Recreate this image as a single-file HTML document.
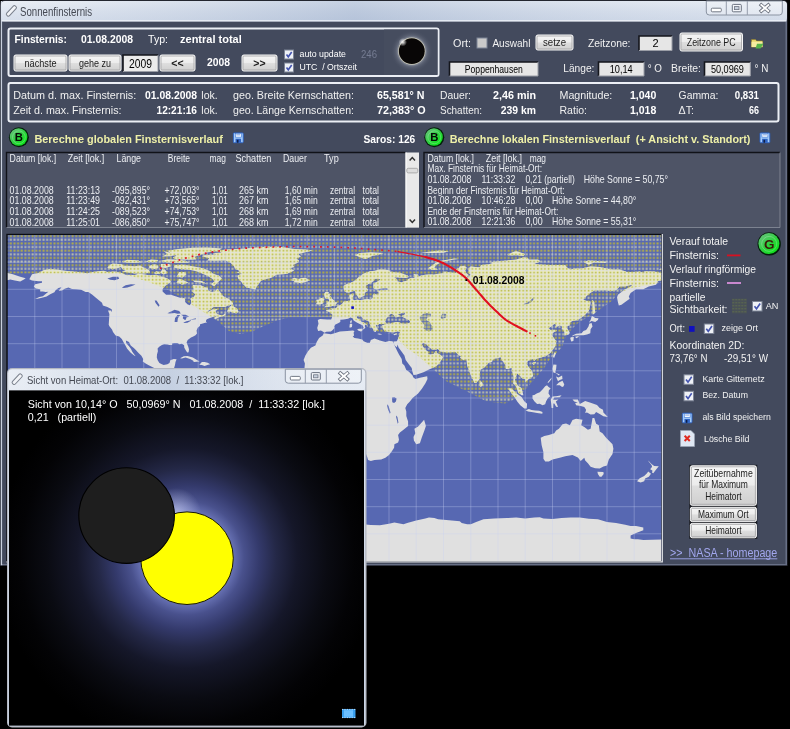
<!DOCTYPE html>
<html lang="de"><head><meta charset="utf-8"><title>Sonnenfinsternis</title>
<style>
html,body{margin:0;padding:0;background:#000;overflow:hidden}
body{width:790px;height:729px;font-family:"Liberation Sans",sans-serif}
svg{display:block;position:absolute;left:0;top:0;will-change:transform}
svg text{font-family:"Liberation Sans",sans-serif;white-space:pre}
</style></head><body>
<svg width="790" height="729" viewBox="0 0 790 729">
<defs>
<linearGradient id="btn" x1="0" y1="0" x2="0" y2="1"><stop offset="0" stop-color="#f6f6f6"/><stop offset="0.48" stop-color="#ececec"/><stop offset="0.52" stop-color="#dedede"/><stop offset="1" stop-color="#cfcfcf"/></linearGradient>
<linearGradient id="ttl" x1="0" y1="0" x2="0" y2="1"><stop offset="0" stop-color="#e3e9f2"/><stop offset="0.5" stop-color="#d3dcea"/><stop offset="1" stop-color="#c9d4e5"/></linearGradient>
<linearGradient id="ttlh" x1="0" y1="0" x2="1" y2="0"><stop offset="0" stop-color="#ffffff" stop-opacity="0.25"/><stop offset="0.45" stop-color="#8fa3c4" stop-opacity="0.35"/><stop offset="1" stop-color="#ffffff" stop-opacity="0.15"/></linearGradient>
<linearGradient id="grn" x1="0.15" y1="0.1" x2="0.85" y2="0.9"><stop offset="0" stop-color="#62c477"/><stop offset="0.5" stop-color="#2fd040"/><stop offset="1" stop-color="#0ce41a"/></linearGradient>
<radialGradient id="glow" cx="187" cy="558" r="190" gradientUnits="userSpaceOnUse">
<stop offset="0" stop-color="#7a84c0"/><stop offset="0.245" stop-color="#6670b2"/><stop offset="0.30" stop-color="#49518d"/><stop offset="0.38" stop-color="#343a6c"/><stop offset="0.47" stop-color="#242847"/><stop offset="0.58" stop-color="#151729"/><stop offset="0.74" stop-color="#0a0b12"/><stop offset="0.88" stop-color="#030305"/><stop offset="1" stop-color="#000000"/></radialGradient>
<radialGradient id="glow2" cx="176" cy="513" r="25" gradientUnits="userSpaceOnUse"><stop offset="0" stop-color="#c8cef4" stop-opacity="0.7"/><stop offset="1" stop-color="#c8cef4" stop-opacity="0"/></radialGradient>
<radialGradient id="hl" cx="0.5" cy="0.5" r="0.5"><stop offset="0" stop-color="#fff" stop-opacity="0.95"/><stop offset="1" stop-color="#fff" stop-opacity="0"/></radialGradient>
<radialGradient id="corona" cx="0.5" cy="0.5" r="0.5"><stop offset="0.6" stop-color="#c8ccd2" stop-opacity="0.75"/><stop offset="0.75" stop-color="#8a90a0" stop-opacity="0.32"/><stop offset="1" stop-color="#4a5062" stop-opacity="0"/></radialGradient>
</defs>
<rect x="0" y="0" width="790" height="729" fill="#000"/>
<path d="M0 566 V5 Q0 0 5 0 H782.6 Q787.6 0 787.6 5 V566 Z" fill="#23262f"/>
<path d="M0.8 565.2 V5.5 Q0.8 1 5.3 1 H782.5 Q787 1 787 5.5 V565.2 Z" fill="#687086"/>
<rect x="0.8" y="1" width="1.4" height="564.2" fill="#c9d0de"/>
<rect x="1" y="1" width="786" height="21" rx="4" fill="url(#ttl)"/>
<rect x="1" y="1" width="786" height="21" rx="4" fill="url(#ttlh)"/>
<rect x="2.2" y="21.4" width="783.3" height="542.6" fill="#434a5d"/>
<rect x="1.5" y="20.3" width="785" height="1.1" fill="#f2f5fa"/>
<g transform="translate(11.4 10.9) rotate(-47)"><rect x="-6.3" y="-1.9" width="12.6" height="3.8" rx="1.5" fill="#f2f4f8" stroke="#7a808c" stroke-width="1"/></g>
<text x="20.0" y="15.9" font-size="12" fill="#444852" textLength="72.0" lengthAdjust="spacingAndGlyphs">Sonnenfinsternis</text>
<path d="M706.3 1 H782.3 V12.0 Q782.3 15.0 779.3 15.0 H709.3 Q706.3 15.0 706.3 12.0 Z" fill="#ffffff" fill-opacity="0.3" stroke="#8a93a2" stroke-width="1"/>
<path d="M726.3 1 V15.0 M747.3 1 V15.0" stroke="#949cab" stroke-width="1" fill="none"/>
<rect x="711.3" y="8.2" width="10.0" height="3.6" rx="1" fill="#fff" stroke="#747a86" stroke-width="1"/>
<rect x="732.3" y="4.4" width="9.0" height="7.4" rx="1" fill="#f4f6fa" stroke="#6b7280" stroke-width="1"/>
<rect x="734.6" y="6.6" width="4.4" height="3.0" fill="#c9d1de" stroke="#6b7280" stroke-width="0.8"/>
<path d="M761.3 5.0 L768.3 11.0 M768.3 5.0 L761.3 11.0" stroke="#6a707c" stroke-width="3.6" stroke-linecap="square" fill="none"/>
<path d="M761.3 5.0 L768.3 11.0 M768.3 5.0 L761.3 11.0" stroke="#ffffff" stroke-width="1.9" stroke-linecap="square" fill="none"/>
<rect x="8.5" y="28.5" width="430" height="47.5" rx="2" fill="none" stroke="#eceff5" stroke-width="2"/>
<rect x="8.5" y="83" width="770" height="38.5" rx="2" fill="none" stroke="#eceff5" stroke-width="2"/>
<text x="14.5" y="43.0" font-size="10.6" fill="#ffffff" font-weight="bold" textLength="52.5" lengthAdjust="spacingAndGlyphs">Finsternis:</text>
<text x="81.0" y="43.0" font-size="10.6" fill="#ffffff" font-weight="bold" textLength="52.0" lengthAdjust="spacingAndGlyphs">01.08.2008</text>
<text x="148.0" y="43.0" font-size="10.6" fill="#ffffff" textLength="20.0" lengthAdjust="spacingAndGlyphs">Typ:</text>
<text x="180.0" y="43.0" font-size="10.6" fill="#ffffff" font-weight="bold" textLength="61.8" lengthAdjust="spacingAndGlyphs">zentral total</text>
<rect x="14" y="55" width="53" height="16" rx="1.8" fill="url(#btn)" stroke="#f6f6f6" stroke-width="1"/>
<rect x="15" y="56" width="51" height="14" rx="1.2" fill="none" stroke="#a4a4a6" stroke-opacity="0.9" stroke-width="0.9"/>
<text x="40.5" y="66.7" font-size="10.2" fill="#1c1c1c" text-anchor="middle" textLength="32" lengthAdjust="spacingAndGlyphs">nächste</text>
<rect x="69" y="55" width="52" height="16" rx="1.8" fill="url(#btn)" stroke="#f6f6f6" stroke-width="1"/>
<rect x="70" y="56" width="50" height="14" rx="1.2" fill="none" stroke="#a4a4a6" stroke-opacity="0.9" stroke-width="0.9"/>
<text x="95.0" y="66.7" font-size="10.2" fill="#1c1c1c" text-anchor="middle" textLength="32" lengthAdjust="spacingAndGlyphs">gehe zu</text>
<rect x="123" y="55" width="35" height="16.5" fill="#ebebeb"/>
<path d="M123 71.5 V55 H158" fill="none" stroke="#14161c" stroke-width="1.6"/>
<path d="M123 71.5 H158 V55" fill="none" stroke="#9a9da6" stroke-width="1"/>
<text x="140.5" y="67.9" font-size="12.8" fill="#000" text-anchor="middle" textLength="23" lengthAdjust="spacingAndGlyphs">2009</text>
<rect x="160" y="55" width="35" height="16" rx="1.8" fill="url(#btn)" stroke="#f6f6f6" stroke-width="1"/>
<rect x="161" y="56" width="33" height="14" rx="1.2" fill="none" stroke="#a4a4a6" stroke-opacity="0.9" stroke-width="0.9"/>
<text x="177.5" y="66.8" font-size="10.5" fill="#1c1c1c" text-anchor="middle" font-weight="bold">&lt;&lt;</text>
<text x="207.0" y="66.3" font-size="10.6" fill="#ffffff" font-weight="bold" textLength="23.0" lengthAdjust="spacingAndGlyphs">2008</text>
<rect x="242" y="55" width="35" height="16" rx="1.8" fill="url(#btn)" stroke="#f6f6f6" stroke-width="1"/>
<rect x="243" y="56" width="33" height="14" rx="1.2" fill="none" stroke="#a4a4a6" stroke-opacity="0.9" stroke-width="0.9"/>
<text x="259.5" y="66.8" font-size="10.5" fill="#1c1c1c" text-anchor="middle" font-weight="bold">&gt;&gt;</text>
<rect x="284.5" y="50" width="9" height="9" fill="#eef1f6" stroke="#7d8496" stroke-width="1"/>
<path d="M286.5 54.5 L288.28 56.8 L291.7 52" fill="none" stroke="#4454b0" stroke-width="1.6"/>
<text x="299.5" y="57.0" font-size="9.4" fill="#ffffff" textLength="46.5" lengthAdjust="spacingAndGlyphs">auto update</text>
<text x="361.0" y="57.5" font-size="10.6" fill="#757c92" textLength="16.0" lengthAdjust="spacingAndGlyphs">246</text>
<rect x="284.5" y="63" width="9" height="9" fill="#eef1f6" stroke="#7d8496" stroke-width="1"/>
<path d="M286.5 67.5 L288.28 69.8 L291.7 65" fill="none" stroke="#4454b0" stroke-width="1.6"/>
<text x="299.5" y="70.0" font-size="9.4" fill="#ffffff" textLength="57.5" lengthAdjust="spacingAndGlyphs">UTC  / Ortszeit</text>
<rect x="384" y="29.5" width="53.5" height="45.5" fill="#464d5f"/>
<circle cx="411.8" cy="51.2" r="21" fill="url(#corona)"/>
<circle cx="411.8" cy="51.2" r="13.6" fill="#cfcdb8" fill-opacity="0.9"/>
<circle cx="411.8" cy="51.2" r="12.9" fill="#080606"/>
<circle cx="402.8" cy="42.2" r="4.2" fill="url(#hl)"/>
<text x="453.0" y="46.6" font-size="11.4" fill="#f2f2f2" textLength="18.0" lengthAdjust="spacingAndGlyphs">Ort:</text>
<rect x="477" y="38" width="10" height="10" fill="#c9c9c9" stroke="#7d8496" stroke-width="1"/>
<text x="492.4" y="46.6" font-size="11.4" fill="#f2f2f2" textLength="38.0" lengthAdjust="spacingAndGlyphs">Auswahl</text>
<rect x="536" y="35" width="37" height="15" rx="1.8" fill="url(#btn)" stroke="#f6f6f6" stroke-width="1"/>
<rect x="537" y="36" width="35" height="13" rx="1.2" fill="none" stroke="#a4a4a6" stroke-opacity="0.9" stroke-width="0.9"/>
<text x="554.5" y="46.3" font-size="10.6" fill="#1c1c1c" text-anchor="middle" textLength="23" lengthAdjust="spacingAndGlyphs">setze</text>
<text x="588.0" y="46.6" font-size="11.4" fill="#f2f2f2" textLength="42.5" lengthAdjust="spacingAndGlyphs">Zeitzone:</text>
<rect x="639" y="36" width="33" height="14.5" fill="#e6e6e6"/>
<path d="M639 50.5 V36 H672" fill="none" stroke="#14161c" stroke-width="1.6"/>
<path d="M639 50.5 H672 V36" fill="none" stroke="#9a9da6" stroke-width="1"/>
<text x="655.5" y="47.2" font-size="11" fill="#000" text-anchor="middle">2</text>
<rect x="680" y="33" width="62.5" height="18" rx="1.8" fill="url(#btn)" stroke="#f6f6f6" stroke-width="1"/>
<rect x="681" y="34" width="60.5" height="16" rx="1.2" fill="none" stroke="#a4a4a6" stroke-opacity="0.9" stroke-width="0.9"/>
<text x="711.2" y="45.8" font-size="10.6" fill="#1c1c1c" text-anchor="middle" textLength="49" lengthAdjust="spacingAndGlyphs">Zeitzone PC</text>
<g transform="translate(751.5 37.5)"><path d="M0 2 H4 L5.2 3.4 H11 V9.6 H0 Z" fill="#e9d66a" stroke="#8d7a2a" stroke-width="0.6"/><path d="M0 4.2 H11 V9.6 H0 Z" fill="#f6eda0"/><path d="M5.5 6.2 L12 6.2 L9 11 L4 11 Z" fill="#57b44a"/></g>
<rect x="449.5" y="62" width="88.5" height="14" fill="#e6e6e6"/>
<path d="M449.5 76 V62 H538" fill="none" stroke="#14161c" stroke-width="1.6"/>
<path d="M449.5 76 H538 V62" fill="none" stroke="#9a9da6" stroke-width="1"/>
<text x="493.8" y="72.7" font-size="10.2" fill="#000" text-anchor="middle" textLength="58" lengthAdjust="spacingAndGlyphs">Poppenhausen</text>
<text x="563.3" y="72.4" font-size="11.4" fill="#f2f2f2" textLength="31.1" lengthAdjust="spacingAndGlyphs">Länge:</text>
<rect x="598.5" y="62" width="45.5" height="14" fill="#e6e6e6"/>
<path d="M598.5 76 V62 H644" fill="none" stroke="#14161c" stroke-width="1.6"/>
<path d="M598.5 76 H644 V62" fill="none" stroke="#9a9da6" stroke-width="1"/>
<text x="621.2" y="72.7" font-size="10.2" fill="#000" text-anchor="middle" textLength="23" lengthAdjust="spacingAndGlyphs">10,14</text>
<text x="647.7" y="72.4" font-size="11.4" fill="#f2f2f2" textLength="14.3" lengthAdjust="spacingAndGlyphs">° O</text>
<text x="671.0" y="72.4" font-size="11.4" fill="#f2f2f2" textLength="30.0" lengthAdjust="spacingAndGlyphs">Breite:</text>
<rect x="704.5" y="62" width="45.799999999999955" height="14" fill="#e6e6e6"/>
<path d="M704.5 76 V62 H750.3" fill="none" stroke="#14161c" stroke-width="1.6"/>
<path d="M704.5 76 H750.3 V62" fill="none" stroke="#9a9da6" stroke-width="1"/>
<text x="727.4" y="72.7" font-size="10.2" fill="#000" text-anchor="middle" textLength="33" lengthAdjust="spacingAndGlyphs">50,0969</text>
<text x="754.6" y="72.4" font-size="11.4" fill="#f2f2f2" textLength="13.9" lengthAdjust="spacingAndGlyphs">° N</text>
<text x="13.2" y="98.5" font-size="11.2" fill="#f0f0f0" textLength="123.0" lengthAdjust="spacingAndGlyphs">Datum d. max. Finsternis:</text>
<text x="145.0" y="98.5" font-size="10.6" fill="#ffffff" font-weight="bold" textLength="52.0" lengthAdjust="spacingAndGlyphs">01.08.2008</text>
<text x="201.3" y="98.5" font-size="11.2" fill="#f0f0f0" textLength="16.4" lengthAdjust="spacingAndGlyphs">lok.</text>
<text x="233.0" y="98.5" font-size="11.2" fill="#f0f0f0" textLength="121.0" lengthAdjust="spacingAndGlyphs">geo. Breite Kernschatten:</text>
<text x="377.0" y="98.5" font-size="10.6" fill="#ffffff" font-weight="bold" textLength="47.5" lengthAdjust="spacingAndGlyphs">65,581° N</text>
<text x="440.0" y="98.5" font-size="11.2" fill="#f0f0f0" textLength="31.0" lengthAdjust="spacingAndGlyphs">Dauer:</text>
<text x="493.0" y="98.5" font-size="10.6" fill="#ffffff" font-weight="bold" textLength="43.0" lengthAdjust="spacingAndGlyphs">2,46 min</text>
<text x="559.5" y="98.5" font-size="11.2" fill="#f0f0f0" textLength="52.8" lengthAdjust="spacingAndGlyphs">Magnitude:</text>
<text x="630.0" y="98.5" font-size="10.6" fill="#ffffff" font-weight="bold" textLength="26.3" lengthAdjust="spacingAndGlyphs">1,040</text>
<text x="678.6" y="98.5" font-size="11.2" fill="#f0f0f0" textLength="39.8" lengthAdjust="spacingAndGlyphs">Gamma:</text>
<text x="734.8" y="98.5" font-size="10.6" fill="#ffffff" font-weight="bold" textLength="24.2" lengthAdjust="spacingAndGlyphs">0,831</text>
<text x="13.2" y="114.2" font-size="11.2" fill="#f0f0f0" textLength="108.3" lengthAdjust="spacingAndGlyphs">Zeit d. max. Finsternis:</text>
<text x="156.5" y="114.2" font-size="10.6" fill="#ffffff" font-weight="bold" textLength="40.5" lengthAdjust="spacingAndGlyphs">12:21:16</text>
<text x="201.3" y="114.2" font-size="11.2" fill="#f0f0f0" textLength="16.4" lengthAdjust="spacingAndGlyphs">lok.</text>
<text x="233.0" y="114.2" font-size="11.2" fill="#f0f0f0" textLength="121.0" lengthAdjust="spacingAndGlyphs">geo. Länge Kernschatten:</text>
<text x="377.0" y="114.2" font-size="10.6" fill="#ffffff" font-weight="bold" textLength="48.6" lengthAdjust="spacingAndGlyphs">72,383° O</text>
<text x="440.0" y="114.2" font-size="11.2" fill="#f0f0f0" textLength="42.0" lengthAdjust="spacingAndGlyphs">Schatten:</text>
<text x="500.8" y="114.2" font-size="10.6" fill="#ffffff" font-weight="bold" textLength="35.2" lengthAdjust="spacingAndGlyphs">239 km</text>
<text x="559.5" y="114.2" font-size="11.2" fill="#f0f0f0" textLength="27.5" lengthAdjust="spacingAndGlyphs">Ratio:</text>
<text x="630.0" y="114.2" font-size="10.6" fill="#ffffff" font-weight="bold" textLength="26.3" lengthAdjust="spacingAndGlyphs">1,018</text>
<text x="678.6" y="114.2" font-size="11.2" fill="#f0f0f0" textLength="15.4" lengthAdjust="spacingAndGlyphs">ΔT:</text>
<text x="749.0" y="114.2" font-size="10.6" fill="#ffffff" font-weight="bold" textLength="10.0" lengthAdjust="spacingAndGlyphs">66</text>
<circle cx="18.9" cy="137.3" r="10" fill="#04200a"/>
<circle cx="18.599999999999998" cy="137.0" r="8.8" fill="url(#grn)"/>
<circle cx="18.9" cy="137.3" r="6.4" fill="none" stroke="#ffffff" stroke-opacity="0.22" stroke-width="1"/>
<text x="18.9" y="141.4" font-size="11.3" font-weight="bold" fill="#050805" text-anchor="middle">B</text>
<text x="34.4" y="142.8" font-size="11.6" fill="#eef0a8" font-weight="bold" textLength="188.4" lengthAdjust="spacingAndGlyphs">Berechne globalen Finsternisverlauf</text>
<g transform="translate(233 132.5) scale(0.9636363636363636)"><rect x="0.4" y="0.4" width="10.2" height="10.2" rx="0.8" fill="#a4cdfb" stroke="#2a62c8" stroke-width="0.9"/><rect x="2.4" y="1" width="6.2" height="3.8" fill="#f4f9ff" stroke="#3a72d0" stroke-width="0.6"/><path d="M3.4 2.4 H7.6" stroke="#3a72d0" stroke-width="0.7"/><rect x="2.6" y="6.5" width="5.8" height="4.1" fill="#2f64c4"/><rect x="4" y="7.6" width="1.7" height="3" fill="#0e1f48"/></g>
<text x="363.5" y="143.0" font-size="11" fill="#ffffff" font-weight="bold" textLength="51.8" lengthAdjust="spacingAndGlyphs">Saros: 126</text>
<circle cx="434.3" cy="137.3" r="10" fill="#04200a"/>
<circle cx="434.0" cy="137.0" r="8.8" fill="url(#grn)"/>
<circle cx="434.3" cy="137.3" r="6.4" fill="none" stroke="#ffffff" stroke-opacity="0.22" stroke-width="1"/>
<text x="434.3" y="141.4" font-size="11.3" font-weight="bold" fill="#050805" text-anchor="middle">B</text>
<text x="449.7" y="142.8" font-size="11.6" fill="#eef0a8" font-weight="bold" textLength="300.8" lengthAdjust="spacingAndGlyphs">Berechne lokalen Finsternisverlauf  (+ Ansicht v. Standort)</text>
<g transform="translate(759.6 132.5) scale(0.9636363636363636)"><rect x="0.4" y="0.4" width="10.2" height="10.2" rx="0.8" fill="#a4cdfb" stroke="#2a62c8" stroke-width="0.9"/><rect x="2.4" y="1" width="6.2" height="3.8" fill="#f4f9ff" stroke="#3a72d0" stroke-width="0.6"/><path d="M3.4 2.4 H7.6" stroke="#3a72d0" stroke-width="0.7"/><rect x="2.6" y="6.5" width="5.8" height="4.1" fill="#2f64c4"/><rect x="4" y="7.6" width="1.7" height="3" fill="#0e1f48"/></g>
<rect x="6.5" y="152.5" width="399" height="75" fill="#4e5466"/>
<path d="M6.5 227.5 V152.5 H405.5" fill="none" stroke="#101218" stroke-width="1.4"/>
<path d="M6.5 227.5 H419" fill="none" stroke="#8a8f9c" stroke-width="0.8"/>
<rect x="405.5" y="152.5" width="13.5" height="75" fill="#e9e9e9"/>
<rect x="405.5" y="152.5" width="1.2" height="75" fill="#fafafa"/>
<path d="M409.6 160.6 L412.3 157.6 L415 160.6" fill="none" stroke="#303030" stroke-width="1.5"/>
<path d="M409.6 219.4 L412.3 222.4 L415 219.4" fill="none" stroke="#303030" stroke-width="1.5"/>
<rect x="406.8" y="168.3" width="11" height="4.6" rx="1.5" fill="#dcdcdc" stroke="#a6a6a6" stroke-width="0.9"/>
<rect x="424" y="152.5" width="356" height="75" fill="#4e5466"/>
<path d="M424 227.5 V152.5 H780" fill="none" stroke="#101218" stroke-width="1.4"/>
<path d="M424 227.5 H780 V152.5" fill="none" stroke="#8a8f9c" stroke-width="0.8"/>
<text x="9.6" y="161.8" font-size="10.4" fill="#eceef2" textLength="46.6" lengthAdjust="spacingAndGlyphs">Datum [lok.]</text>
<text x="67.8" y="161.8" font-size="10.4" fill="#eceef2" textLength="36.5" lengthAdjust="spacingAndGlyphs">Zeit [lok.]</text>
<text x="116.5" y="161.8" font-size="10.4" fill="#eceef2" textLength="24.5" lengthAdjust="spacingAndGlyphs">Länge</text>
<text x="167.8" y="161.8" font-size="10.4" fill="#eceef2" textLength="22.2" lengthAdjust="spacingAndGlyphs">Breite</text>
<text x="209.6" y="161.8" font-size="10.4" fill="#eceef2" textLength="16.4" lengthAdjust="spacingAndGlyphs">mag</text>
<text x="235.4" y="161.8" font-size="10.4" fill="#eceef2" textLength="36.0" lengthAdjust="spacingAndGlyphs">Schatten</text>
<text x="283.0" y="161.8" font-size="10.4" fill="#eceef2" textLength="23.8" lengthAdjust="spacingAndGlyphs">Dauer</text>
<text x="324.0" y="161.8" font-size="10.4" fill="#eceef2" textLength="14.7" lengthAdjust="spacingAndGlyphs">Typ</text>
<text x="9.6" y="193.8" font-size="10.4" fill="#eceef2" textLength="44.1" lengthAdjust="spacingAndGlyphs">01.08.2008</text>
<text x="66.3" y="193.8" font-size="10.4" fill="#eceef2" textLength="33.7" lengthAdjust="spacingAndGlyphs">11:23:13</text>
<text x="112.0" y="193.8" font-size="10.4" fill="#eceef2" textLength="38.0" lengthAdjust="spacingAndGlyphs">-095,895°</text>
<text x="164.6" y="193.8" font-size="10.4" fill="#eceef2" textLength="34.9" lengthAdjust="spacingAndGlyphs">+72,003°</text>
<text x="212.0" y="193.8" font-size="10.4" fill="#eceef2" textLength="15.8" lengthAdjust="spacingAndGlyphs">1,01</text>
<text x="239.0" y="193.8" font-size="10.4" fill="#eceef2" textLength="29.4" lengthAdjust="spacingAndGlyphs">265 km</text>
<text x="284.8" y="193.8" font-size="10.4" fill="#eceef2" textLength="32.9" lengthAdjust="spacingAndGlyphs">1,60 min</text>
<text x="330.0" y="193.8" font-size="10.4" fill="#eceef2" textLength="25.0" lengthAdjust="spacingAndGlyphs">zentral</text>
<text x="362.5" y="193.8" font-size="10.4" fill="#eceef2" textLength="16.5" lengthAdjust="spacingAndGlyphs">total</text>
<text x="9.6" y="204.4" font-size="10.4" fill="#eceef2" textLength="44.1" lengthAdjust="spacingAndGlyphs">01.08.2008</text>
<text x="66.3" y="204.4" font-size="10.4" fill="#eceef2" textLength="33.7" lengthAdjust="spacingAndGlyphs">11:23:49</text>
<text x="112.0" y="204.4" font-size="10.4" fill="#eceef2" textLength="38.0" lengthAdjust="spacingAndGlyphs">-092,431°</text>
<text x="164.6" y="204.4" font-size="10.4" fill="#eceef2" textLength="34.9" lengthAdjust="spacingAndGlyphs">+73,565°</text>
<text x="212.0" y="204.4" font-size="10.4" fill="#eceef2" textLength="15.8" lengthAdjust="spacingAndGlyphs">1,01</text>
<text x="239.0" y="204.4" font-size="10.4" fill="#eceef2" textLength="29.4" lengthAdjust="spacingAndGlyphs">267 km</text>
<text x="284.8" y="204.4" font-size="10.4" fill="#eceef2" textLength="32.9" lengthAdjust="spacingAndGlyphs">1,65 min</text>
<text x="330.0" y="204.4" font-size="10.4" fill="#eceef2" textLength="25.0" lengthAdjust="spacingAndGlyphs">zentral</text>
<text x="362.5" y="204.4" font-size="10.4" fill="#eceef2" textLength="16.5" lengthAdjust="spacingAndGlyphs">total</text>
<text x="9.6" y="214.9" font-size="10.4" fill="#eceef2" textLength="44.1" lengthAdjust="spacingAndGlyphs">01.08.2008</text>
<text x="66.3" y="214.9" font-size="10.4" fill="#eceef2" textLength="33.7" lengthAdjust="spacingAndGlyphs">11:24:25</text>
<text x="112.0" y="214.9" font-size="10.4" fill="#eceef2" textLength="38.0" lengthAdjust="spacingAndGlyphs">-089,523°</text>
<text x="164.6" y="214.9" font-size="10.4" fill="#eceef2" textLength="34.9" lengthAdjust="spacingAndGlyphs">+74,753°</text>
<text x="212.0" y="214.9" font-size="10.4" fill="#eceef2" textLength="15.8" lengthAdjust="spacingAndGlyphs">1,01</text>
<text x="239.0" y="214.9" font-size="10.4" fill="#eceef2" textLength="29.4" lengthAdjust="spacingAndGlyphs">268 km</text>
<text x="284.8" y="214.9" font-size="10.4" fill="#eceef2" textLength="32.9" lengthAdjust="spacingAndGlyphs">1,69 min</text>
<text x="330.0" y="214.9" font-size="10.4" fill="#eceef2" textLength="25.0" lengthAdjust="spacingAndGlyphs">zentral</text>
<text x="362.5" y="214.9" font-size="10.4" fill="#eceef2" textLength="16.5" lengthAdjust="spacingAndGlyphs">total</text>
<text x="9.6" y="225.5" font-size="10.4" fill="#eceef2" textLength="44.1" lengthAdjust="spacingAndGlyphs">01.08.2008</text>
<text x="66.3" y="225.5" font-size="10.4" fill="#eceef2" textLength="33.7" lengthAdjust="spacingAndGlyphs">11:25:01</text>
<text x="112.0" y="225.5" font-size="10.4" fill="#eceef2" textLength="38.0" lengthAdjust="spacingAndGlyphs">-086,850°</text>
<text x="164.6" y="225.5" font-size="10.4" fill="#eceef2" textLength="34.9" lengthAdjust="spacingAndGlyphs">+75,747°</text>
<text x="212.0" y="225.5" font-size="10.4" fill="#eceef2" textLength="15.8" lengthAdjust="spacingAndGlyphs">1,01</text>
<text x="239.0" y="225.5" font-size="10.4" fill="#eceef2" textLength="29.4" lengthAdjust="spacingAndGlyphs">268 km</text>
<text x="284.8" y="225.5" font-size="10.4" fill="#eceef2" textLength="32.9" lengthAdjust="spacingAndGlyphs">1,72 min</text>
<text x="330.0" y="225.5" font-size="10.4" fill="#eceef2" textLength="25.0" lengthAdjust="spacingAndGlyphs">zentral</text>
<text x="362.5" y="225.5" font-size="10.4" fill="#eceef2" textLength="16.5" lengthAdjust="spacingAndGlyphs">total</text>
<text x="427.5" y="161.8" font-size="10.4" fill="#eceef2" textLength="46.5" lengthAdjust="spacingAndGlyphs">Datum [lok.]</text>
<text x="485.7" y="161.8" font-size="10.4" fill="#eceef2" textLength="36.3" lengthAdjust="spacingAndGlyphs">Zeit [lok.]</text>
<text x="529.7" y="161.8" font-size="10.4" fill="#eceef2" textLength="16.3" lengthAdjust="spacingAndGlyphs">mag</text>
<text x="427.5" y="172.2" font-size="10.4" fill="#eceef2" textLength="114.5" lengthAdjust="spacingAndGlyphs">Max. Finsternis für Heimat-Ort:</text>
<text x="427.5" y="183.0" font-size="10.4" fill="#eceef2" textLength="44.0" lengthAdjust="spacingAndGlyphs">01.08.2008</text>
<text x="481.6" y="183.0" font-size="10.4" fill="#eceef2" textLength="33.7" lengthAdjust="spacingAndGlyphs">11:33:32</text>
<text x="525.4" y="183.0" font-size="10.4" fill="#eceef2" textLength="49.4" lengthAdjust="spacingAndGlyphs">0,21 (partiell)</text>
<text x="583.7" y="183.0" font-size="10.4" fill="#eceef2" textLength="84.3" lengthAdjust="spacingAndGlyphs">Höhe Sonne = 50,75°</text>
<text x="427.5" y="193.5" font-size="10.4" fill="#eceef2" textLength="137.2" lengthAdjust="spacingAndGlyphs">Beginn der Finsternis für Heimat-Ort:</text>
<text x="427.5" y="204.0" font-size="10.4" fill="#eceef2" textLength="44.0" lengthAdjust="spacingAndGlyphs">01.08.2008</text>
<text x="481.6" y="204.0" font-size="10.4" fill="#eceef2" textLength="33.7" lengthAdjust="spacingAndGlyphs">10:46:28</text>
<text x="525.4" y="204.0" font-size="10.4" fill="#eceef2" textLength="17.3" lengthAdjust="spacingAndGlyphs">0,00</text>
<text x="552.0" y="204.0" font-size="10.4" fill="#eceef2" textLength="84.3" lengthAdjust="spacingAndGlyphs">Höhe Sonne = 44,80°</text>
<text x="427.5" y="214.6" font-size="10.4" fill="#eceef2" textLength="130.9" lengthAdjust="spacingAndGlyphs">Ende der Finsternis für Heimat-Ort:</text>
<text x="427.5" y="225.2" font-size="10.4" fill="#eceef2" textLength="44.0" lengthAdjust="spacingAndGlyphs">01.08.2008</text>
<text x="481.6" y="225.2" font-size="10.4" fill="#eceef2" textLength="33.7" lengthAdjust="spacingAndGlyphs">12:21:36</text>
<text x="525.4" y="225.2" font-size="10.4" fill="#eceef2" textLength="17.3" lengthAdjust="spacingAndGlyphs">0,00</text>
<text x="552.0" y="225.2" font-size="10.4" fill="#eceef2" textLength="84.3" lengthAdjust="spacingAndGlyphs">Höhe Sonne = 55,31°</text>
<defs><clipPath id="mapclip"><rect x="7.5" y="235.0" width="654.0" height="326.0"/></clipPath>
<pattern id="dotsL" x="9.371" y="234.691" width="3.6333" height="3.6333" patternUnits="userSpaceOnUse"><rect x="0" y="0" width="3" height="3" fill="#fbfb8a" fill-opacity="0.45"/><rect x="0.7" y="0.7" width="1.6" height="1.6" fill="#b6b84e"/></pattern>
<pattern id="dotsS" x="9.371" y="234.691" width="3.6333" height="7.2667" patternUnits="userSpaceOnUse"><rect x="0.45" y="0.45" width="2" height="2" fill="#b6b042"/><rect x="0.45" y="4.083" width="2" height="2" fill="#c2c4a8"/></pattern>
<pattern id="dots2" x="732.5" y="299" width="3" height="3" patternUnits="userSpaceOnUse"><rect x="0" y="0" width="1.4" height="1.4" fill="#5d6a4c"/></pattern>
<clipPath id="visclip"><path d="M7.5 235.0 L661.5 235.0 L661.5 282.5 L632.0 288.0 L618.0 293.0 L613.0 300.0 L597.0 311.6 L578.0 323.0 L567.0 334.0 L561.5 348.0 L550.5 358.4 L544.5 367.5 L539.5 373.5 L533.4 380.6 L524.3 390.8 L513.0 400.0 L505.0 403.5 L486.6 401.5 L466.0 391.0 L446.0 381.0 L433.4 369.6 L417.0 355.0 L406.0 347.7 L398.7 340.0 L396.0 334.0 L384.0 333.0 L372.0 330.0 L362.0 323.0 L352.0 318.0 L332.7 317.3 L290.0 317.3 L277.0 320.5 L264.0 326.0 L252.0 331.5 L240.0 334.0 L229.0 331.0 L217.6 321.0 L203.4 312.0 L189.0 303.0 L178.6 296.0 L164.4 288.0 L148.5 282.0 L132.5 276.6 L118.0 273.5 L90.0 273.5 L7.5 273.5Z"/></clipPath>
<clipPath id="landclip"><path d="M29.3 279.2 L32.0 274.3 L38.4 273.0 L43.8 270.1 L50.2 268.9 L58.4 269.8 L67.4 270.9 L78.4 271.9 L87.4 273.2 L92.9 272.1 L100.1 271.0 L103.8 270.7 L107.4 272.1 L114.7 271.6 L121.9 273.0 L125.6 274.8 L134.7 275.0 L138.3 273.8 L143.8 274.3 L149.2 275.2 L156.5 274.8 L160.1 276.3 L163.7 277.0 L167.4 278.5 L170.1 280.3 L171.0 282.1 L167.4 284.3 L164.6 286.6 L162.6 289.3 L162.6 291.5 L166.1 294.8 L171.0 294.8 L174.6 296.0 L180.1 297.8 L185.0 298.2 L185.2 302.0 L187.4 304.2 L189.7 305.3 L191.3 302.9 L191.0 300.2 L190.1 298.8 L193.7 296.9 L195.3 294.2 L191.9 291.5 L193.7 289.3 L192.8 286.6 L192.8 285.0 L197.3 285.2 L201.0 285.3 L204.6 287.2 L207.7 287.5 L208.2 290.2 L211.0 292.1 L214.6 291.5 L216.4 289.7 L217.3 288.6 L220.1 292.1 L222.8 295.7 L225.5 297.5 L229.1 298.9 L231.0 300.9 L233.1 302.9 L232.8 304.5 L228.2 305.3 L225.5 306.9 L220.1 306.9 L213.7 307.1 L211.0 308.9 L208.2 311.1 L205.5 313.2 L208.2 311.8 L212.8 309.3 L216.4 308.9 L217.7 309.6 L215.5 311.1 L216.4 312.9 L217.1 314.1 L220.1 314.9 L222.8 315.2 L225.5 312.9 L225.5 315.1 L223.7 316.0 L219.1 317.2 L215.1 319.2 L214.2 317.8 L217.3 315.8 L214.6 316.1 L212.8 316.9 L209.2 318.3 L206.8 319.2 L205.9 320.8 L206.2 322.1 L207.3 322.5 L205.2 322.8 L202.8 323.4 L200.1 324.3 L199.9 325.9 L197.7 327.7 L196.6 330.4 L197.0 333.5 L195.5 335.2 L193.2 336.4 L191.0 337.5 L187.7 339.9 L186.6 342.4 L188.3 346.7 L189.0 349.5 L188.6 352.2 L187.2 352.4 L185.9 350.4 L184.3 347.7 L184.1 345.3 L181.9 343.7 L179.4 344.2 L177.4 342.9 L174.6 342.9 L172.3 343.3 L172.1 345.1 L169.5 345.1 L167.4 344.4 L164.1 344.2 L161.9 345.1 L159.2 346.7 L157.6 348.6 L157.9 351.3 L157.0 354.5 L156.8 357.6 L157.7 360.3 L159.4 363.0 L161.9 364.3 L163.7 365.0 L167.4 364.3 L169.5 363.0 L170.3 360.3 L173.7 359.1 L176.6 359.2 L175.5 362.1 L175.0 364.9 L174.1 368.1 L173.2 369.4 L178.3 369.4 L183.0 370.5 L182.8 375.4 L182.4 378.1 L184.6 381.2 L187.4 382.1 L190.1 380.8 L192.8 381.2 L194.1 382.6 L192.3 384.2 L189.2 384.8 L186.4 383.9 L183.7 383.0 L180.1 380.3 L178.6 378.1 L175.5 374.5 L172.8 373.7 L168.3 372.6 L164.6 369.7 L161.9 368.8 L158.3 369.2 L153.7 367.8 L149.2 365.6 L145.6 363.6 L142.8 361.4 L143.2 358.9 L141.4 355.8 L138.3 352.7 L135.8 350.0 L133.8 348.0 L130.7 345.5 L129.0 341.9 L125.9 340.6 L126.3 343.3 L129.2 346.4 L131.0 349.1 L132.3 351.8 L134.1 354.2 L135.6 356.2 L134.1 355.6 L130.7 352.7 L127.0 348.6 L125.6 345.8 L123.8 342.8 L121.8 339.1 L119.2 336.4 L115.6 335.5 L113.0 331.9 L112.0 329.5 L109.6 326.5 L108.7 324.8 L108.9 321.9 L109.2 317.4 L109.4 314.1 L108.0 310.5 L111.0 310.5 L112.0 312.3 L111.8 309.6 L110.7 308.7 L107.4 307.1 L102.9 305.6 L102.0 302.7 L98.3 299.7 L95.6 297.5 L92.0 294.4 L88.3 292.1 L85.6 291.9 L81.1 289.7 L76.5 289.3 L72.0 289.0 L68.4 287.5 L64.7 288.8 L62.0 290.4 L58.7 290.8 L61.5 287.3 L58.4 287.9 L55.6 290.2 L54.4 292.2 L50.2 294.2 L46.6 296.6 L42.0 297.8 L37.5 298.8 L35.1 299.1 L39.3 296.9 L42.9 296.2 L45.6 293.9 L48.4 291.7 L45.6 291.9 L42.9 291.5 L40.2 291.5 L40.2 289.3 L35.7 288.4 L33.8 286.6 L35.1 284.3 L38.4 283.5 L42.0 282.8 L42.0 281.2 L38.4 281.2 L32.0 280.6Z M201.9 256.2 L209.2 258.2 L207.3 260.4 L214.6 260.7 L225.5 260.4 L230.0 262.5 L233.7 265.8 L234.9 268.5 L240.0 271.2 L236.4 272.7 L241.8 273.4 L237.3 275.8 L238.2 278.5 L240.9 281.5 L243.7 284.8 L246.4 287.5 L250.9 288.4 L255.5 289.5 L256.7 286.6 L259.1 283.5 L261.3 280.6 L266.4 279.0 L270.9 278.1 L276.4 274.8 L283.6 274.3 L287.3 273.8 L292.7 271.2 L294.5 270.3 L289.1 268.5 L294.5 267.1 L292.7 264.9 L297.3 263.1 L299.1 260.4 L296.3 258.5 L300.9 256.7 L298.2 254.0 L303.6 252.7 L312.7 250.4 L305.4 249.5 L294.5 248.9 L280.0 246.8 L265.5 246.8 L250.9 248.0 L236.4 248.9 L225.5 249.5 L216.4 251.1 L221.9 252.6 L212.8 253.1 L216.4 254.4 L203.7 255.3Z M290.9 279.2 L294.5 277.7 L298.2 279.0 L301.8 278.1 L305.4 277.7 L308.0 279.2 L309.8 280.3 L307.2 281.5 L300.9 283.2 L297.3 282.6 L293.4 282.3 L294.5 281.0 L290.9 280.5 L293.6 279.7Z M318.1 331.0 L317.2 327.9 L318.5 323.7 L317.8 320.1 L320.0 318.9 L327.2 319.4 L331.2 319.4 L332.3 316.5 L332.3 314.7 L330.0 312.3 L326.3 311.1 L326.0 310.2 L329.1 309.6 L331.8 310.0 L331.2 308.0 L332.7 308.5 L334.9 308.4 L337.2 307.1 L337.4 305.8 L340.9 304.9 L342.7 302.9 L343.6 301.5 L347.2 301.1 L349.9 300.7 L350.3 299.3 L349.4 297.5 L349.4 294.8 L353.6 293.5 L353.6 295.7 L352.7 297.5 L352.7 299.3 L354.5 300.2 L357.2 299.5 L359.9 300.2 L364.5 299.3 L368.1 298.9 L370.5 299.5 L372.7 298.0 L372.7 295.1 L374.5 293.7 L377.2 294.8 L378.6 293.9 L378.6 292.4 L377.2 290.8 L381.7 290.2 L385.4 290.2 L389.0 289.3 L386.3 288.2 L381.7 288.6 L376.3 289.5 L373.6 288.4 L373.2 285.7 L373.6 283.5 L379.0 280.6 L380.5 279.4 L378.1 278.8 L374.5 279.0 L373.6 281.2 L371.7 282.5 L368.1 284.3 L365.9 285.7 L365.7 287.5 L368.1 289.3 L367.2 291.1 L364.8 293.0 L364.5 295.7 L362.7 296.4 L360.5 297.5 L358.1 297.7 L357.6 296.2 L355.9 293.9 L354.8 291.1 L353.6 290.6 L351.8 291.5 L349.0 292.8 L346.3 292.6 L344.5 291.1 L343.6 288.4 L343.6 285.7 L346.3 284.3 L349.9 283.0 L353.6 281.2 L356.3 279.4 L358.1 277.6 L360.8 275.8 L362.7 273.9 L366.3 272.5 L369.9 271.2 L374.5 270.7 L379.0 269.4 L383.5 269.4 L388.1 270.0 L390.8 270.7 L389.9 271.6 L394.4 272.3 L399.9 272.7 L407.2 275.2 L409.0 277.0 L406.3 278.1 L399.9 277.7 L394.4 277.2 L397.2 279.4 L397.7 281.2 L401.7 282.3 L403.5 281.2 L407.2 280.8 L408.1 279.0 L411.7 277.7 L414.4 278.1 L414.4 276.3 L413.5 273.9 L418.1 274.5 L418.1 276.7 L421.7 275.4 L426.2 274.5 L431.7 274.3 L433.5 274.5 L438.1 273.8 L443.5 273.0 L444.4 271.6 L450.8 272.5 L456.2 273.0 L456.2 271.2 L455.7 269.4 L458.9 268.0 L459.8 266.2 L464.4 265.8 L466.8 267.6 L465.3 270.3 L466.2 273.0 L468.4 274.8 L467.1 276.7 L465.3 277.9 L468.9 277.0 L470.4 274.8 L468.9 273.0 L468.4 270.3 L469.5 267.6 L470.8 266.3 L475.3 267.1 L479.8 267.2 L481.1 264.9 L488.9 264.3 L492.6 263.1 L490.7 262.2 L498.0 261.3 L507.1 260.4 L516.2 259.4 L524.0 257.3 L528.0 258.0 L528.9 259.4 L538.0 259.4 L540.7 261.3 L534.3 264.0 L539.8 264.5 L548.9 264.9 L558.0 264.9 L565.2 264.9 L567.0 267.6 L570.7 269.4 L574.3 268.5 L581.6 268.5 L588.8 266.7 L590.6 266.2 L599.7 267.1 L607.0 268.5 L612.5 269.6 L619.7 269.4 L625.2 271.2 L627.0 272.1 L634.2 272.1 L639.7 271.6 L644.2 273.0 L644.2 271.2 L654.2 271.6 L661.5 273.0 L661.5 280.3 L657.9 281.2 L656.1 284.8 L648.8 286.6 L643.3 289.3 L636.1 289.3 L630.6 293.0 L628.8 296.6 L629.7 298.8 L625.2 302.0 L621.5 304.7 L618.8 305.6 L617.9 302.0 L617.0 297.5 L617.9 294.8 L621.5 292.1 L625.2 289.3 L627.9 287.9 L630.6 286.6 L632.4 284.8 L625.2 286.6 L619.7 286.6 L616.1 290.2 L610.6 291.1 L605.2 290.2 L594.3 290.6 L588.8 293.9 L583.4 299.3 L585.2 300.6 L590.6 301.5 L590.6 303.8 L589.7 307.4 L588.8 311.1 L585.2 314.7 L580.7 318.3 L576.1 320.5 L572.5 321.0 L569.8 322.8 L569.8 325.6 L566.1 326.5 L567.9 329.2 L569.8 332.8 L568.9 334.6 L564.3 335.5 L564.3 331.9 L563.4 329.7 L561.6 329.2 L562.1 326.5 L559.8 325.6 L555.2 327.4 L556.1 324.6 L554.3 324.1 L550.7 327.0 L548.3 327.7 L550.7 330.1 L554.3 329.7 L557.0 330.4 L554.3 331.9 L551.6 334.2 L553.4 337.3 L555.8 340.4 L556.1 343.7 L555.2 346.4 L552.5 350.0 L550.7 352.7 L547.0 355.4 L541.6 357.6 L536.1 359.1 L534.3 360.9 L532.5 359.1 L528.0 360.9 L526.5 363.6 L528.9 367.2 L532.5 371.7 L533.1 376.3 L528.9 379.0 L525.2 382.2 L525.2 379.3 L521.6 378.1 L519.8 375.4 L517.1 373.5 L516.2 376.3 L514.9 379.9 L516.2 382.6 L518.0 385.7 L521.6 388.0 L522.5 391.7 L523.4 395.3 L521.6 395.3 L518.0 392.6 L516.7 388.0 L515.3 385.3 L513.1 383.5 L513.4 379.9 L513.4 376.3 L512.0 370.8 L511.6 368.1 L508.0 369.0 L505.8 369.0 L505.3 364.5 L501.6 360.0 L500.7 357.2 L498.0 358.2 L494.4 358.7 L492.6 360.0 L492.2 361.8 L488.9 362.7 L484.4 367.6 L480.2 369.9 L479.8 373.5 L479.5 379.3 L476.2 383.0 L474.4 383.1 L472.6 379.0 L470.4 374.5 L468.9 369.9 L467.1 365.4 L466.6 360.9 L466.2 359.1 L463.5 360.3 L459.8 357.6 L461.7 356.3 L458.9 355.4 L456.8 353.3 L455.3 352.0 L447.1 352.4 L439.9 351.6 L438.1 349.1 L433.5 349.8 L429.9 348.0 L426.6 344.6 L423.5 343.1 L421.7 344.0 L423.0 346.4 L425.3 349.6 L428.1 351.8 L428.2 354.2 L430.8 354.2 L433.5 354.0 L436.2 350.5 L437.1 353.1 L440.8 355.1 L443.1 357.2 L440.8 360.9 L439.3 363.6 L437.1 365.4 L434.4 367.2 L429.0 369.6 L423.5 372.3 L416.2 374.8 L413.5 375.0 L412.3 371.2 L411.7 368.1 L409.0 364.5 L405.7 360.0 L404.4 355.4 L401.7 351.8 L398.4 347.3 L397.7 344.6 L396.8 347.3 L395.0 345.8 L393.7 343.8 L393.4 341.5 L396.8 341.3 L398.1 338.6 L399.5 334.6 L399.9 331.7 L397.2 331.5 L393.5 332.6 L389.9 332.3 L387.2 331.7 L384.5 331.0 L382.6 328.3 L382.3 326.5 L382.1 325.2 L384.5 324.6 L387.2 323.7 L390.8 323.4 L395.4 321.9 L398.1 321.9 L401.7 323.4 L406.3 323.7 L409.9 322.8 L409.9 320.7 L407.2 319.2 L403.5 317.4 L401.7 316.0 L404.4 314.7 L405.3 312.5 L402.6 312.9 L398.1 314.3 L399.9 316.0 L398.1 316.9 L395.5 317.4 L393.9 315.2 L391.7 313.8 L389.0 315.1 L388.3 316.5 L386.6 318.3 L385.4 320.5 L385.4 322.3 L387.2 323.4 L385.4 323.7 L382.3 324.1 L379.0 324.1 L377.7 325.6 L375.9 324.8 L376.3 327.0 L378.1 329.2 L376.3 330.4 L375.9 331.9 L373.9 331.4 L373.2 329.2 L370.8 326.5 L369.7 323.7 L369.4 321.9 L366.3 320.1 L363.2 318.9 L360.8 316.1 L359.4 315.4 L356.8 316.0 L357.0 317.9 L359.2 319.2 L361.8 321.9 L363.6 322.3 L367.9 325.2 L367.2 325.6 L365.4 324.6 L364.7 326.1 L365.4 327.4 L363.9 329.2 L363.0 329.2 L363.6 327.4 L362.7 325.6 L360.3 324.3 L357.2 322.8 L353.6 320.5 L352.7 318.3 L350.3 317.6 L348.1 318.7 L343.6 319.6 L340.3 319.8 L340.3 321.9 L338.1 323.2 L335.4 324.6 L334.0 326.5 L334.5 327.9 L332.7 330.1 L330.9 331.4 L326.3 331.7 L324.5 332.8 L322.7 331.4 L320.9 330.6Z M7.5 273.0 L12.9 274.3 L20.2 276.7 L25.7 278.3 L23.9 279.4 L20.2 281.4 L14.8 280.6 L10.2 279.4 L7.5 280.3Z M323.8 333.2 L330.9 334.2 L334.5 333.2 L339.9 331.4 L347.2 331.0 L352.7 330.4 L354.5 331.0 L353.6 332.8 L354.1 335.5 L352.7 336.4 L354.5 337.9 L358.1 338.4 L362.3 339.5 L363.6 341.3 L367.2 342.8 L369.9 342.8 L370.8 340.0 L374.5 338.4 L379.9 340.4 L385.4 341.9 L389.0 340.9 L392.6 341.3 L393.7 343.7 L395.4 347.3 L397.2 350.9 L399.0 354.5 L401.7 359.1 L402.3 363.6 L404.4 365.4 L406.3 369.9 L409.0 371.7 L412.6 375.4 L413.2 377.2 L415.3 379.0 L419.9 377.7 L427.2 376.3 L427.5 379.0 L425.3 383.5 L421.7 388.9 L418.1 393.5 L412.6 398.0 L409.9 401.6 L407.2 404.3 L405.3 408.0 L406.3 411.6 L406.3 416.1 L408.1 421.5 L408.1 426.1 L403.5 429.7 L399.9 432.4 L398.1 435.1 L399.0 439.7 L398.1 442.4 L394.4 444.2 L394.1 447.8 L391.7 451.4 L389.0 455.1 L385.4 457.8 L381.2 459.6 L374.5 459.9 L370.8 461.0 L368.1 459.9 L367.2 456.9 L365.4 452.3 L362.7 446.9 L360.8 439.7 L358.1 434.2 L355.9 428.8 L357.2 423.4 L359.6 417.9 L358.1 413.4 L356.3 408.0 L351.8 401.6 L351.4 396.2 L352.3 391.7 L349.9 389.9 L345.4 390.2 L342.7 386.6 L337.2 386.8 L330.9 388.9 L325.4 388.6 L320.9 390.0 L316.3 386.8 L310.9 382.6 L307.2 378.1 L303.6 375.4 L302.7 371.4 L304.5 368.1 L304.9 363.6 L303.6 360.0 L305.4 355.4 L308.2 350.9 L310.9 347.7 L315.4 345.5 L316.7 341.9 L319.1 337.9 L322.7 335.5Z M424.1 419.7 L425.9 426.1 L424.4 430.6 L421.7 437.8 L419.9 443.3 L416.2 444.2 L413.9 440.6 L413.5 436.9 L415.3 433.3 L414.4 428.8 L418.1 426.6 L421.7 422.4Z M540.7 437.8 L541.6 445.1 L543.4 452.3 L543.4 458.7 L545.2 461.4 L548.9 461.4 L552.5 459.6 L559.8 457.8 L565.2 456.3 L572.5 455.1 L577.9 457.4 L580.7 461.0 L584.3 457.8 L585.2 460.5 L587.9 463.2 L590.6 466.8 L595.2 468.3 L599.7 468.6 L603.4 466.5 L607.0 465.4 L608.8 459.6 L612.5 454.1 L613.4 448.7 L612.5 444.2 L608.8 440.6 L606.1 437.8 L602.5 433.3 L599.7 431.5 L598.8 425.2 L596.1 423.7 L594.3 417.9 L592.5 417.9 L591.6 423.4 L590.6 428.8 L587.9 429.7 L584.3 427.0 L581.2 425.2 L582.5 419.7 L576.1 418.8 L572.5 420.1 L569.8 425.2 L566.1 423.4 L562.5 424.3 L558.9 428.8 L556.1 430.6 L554.3 433.3 L548.9 434.9 L544.3 436.0Z M597.4 471.7 L603.4 471.9 L603.7 474.1 L601.5 476.8 L599.7 476.8 L597.9 474.1Z M648.2 460.5 L651.5 464.1 L654.2 465.9 L658.8 466.3 L656.1 469.5 L653.3 473.2 L652.1 472.8 L652.4 470.4 L650.2 469.2 L652.1 466.8 L651.5 465.0 L648.8 461.8Z M648.2 471.4 L651.0 473.7 L648.8 476.8 L645.1 478.6 L644.2 481.3 L640.6 482.4 L637.0 481.3 L639.7 478.2 L644.2 475.9 L647.0 473.2Z M572.5 399.4 L577.9 399.4 L579.8 404.0 L585.2 401.1 L590.6 402.7 L597.0 404.9 L599.7 408.0 L603.0 409.8 L603.4 412.5 L607.9 417.0 L603.4 416.3 L599.7 413.9 L596.1 411.9 L594.3 414.3 L590.6 414.5 L587.0 412.5 L585.2 413.0 L586.1 409.8 L584.3 407.1 L580.7 406.0 L576.1 405.2 L575.2 403.1 L577.9 402.5 L574.3 401.6Z M532.5 395.3 L534.3 394.9 L536.7 393.5 L539.8 392.2 L542.5 389.5 L545.2 386.2 L547.0 385.3 L548.3 386.8 L550.7 388.6 L548.9 390.2 L548.5 393.5 L550.3 396.2 L548.0 398.0 L546.1 401.3 L545.2 404.3 L542.5 405.2 L539.8 403.8 L537.1 404.0 L534.3 401.3 L532.5 398.4Z M507.6 387.9 L511.6 388.6 L516.7 393.5 L521.6 397.1 L524.3 401.3 L527.1 403.8 L526.7 408.5 L524.3 408.5 L520.3 405.2 L517.6 402.0 L514.4 397.1 L511.6 393.5Z M525.6 410.3 L528.9 408.9 L531.6 410.1 L535.2 410.5 L539.2 410.7 L542.5 412.1 L542.3 413.8 L537.1 413.0 L531.6 412.1 L528.0 411.4Z M551.6 408.0 L551.2 403.4 L550.7 399.8 L552.5 396.6 L556.1 396.2 L561.6 395.3 L559.8 397.3 L554.3 397.5 L553.0 399.6 L555.2 399.8 L558.5 399.4 L555.8 401.6 L557.0 404.3 L558.0 407.1 L556.1 406.7 L554.3 403.4 L553.4 403.4 L553.2 408.0Z M553.4 364.5 L556.5 364.7 L556.1 369.0 L555.2 372.6 L559.8 374.5 L558.9 375.4 L556.1 373.2 L553.4 372.6 L552.5 369.0Z M556.1 385.3 L558.9 382.6 L562.5 380.8 L564.3 384.4 L563.4 386.6 L562.1 387.1 L559.8 385.3Z M556.1 376.6 L558.5 377.5 L562.1 375.5 L562.5 379.0 L559.8 379.9 L558.0 381.2 L557.0 379.0Z M547.4 382.6 L551.6 377.5 L551.2 379.5 L548.5 382.8Z M572.3 336.4 L574.3 335.5 L579.8 335.2 L583.4 335.2 L587.0 334.6 L590.3 333.3 L590.6 329.2 L592.5 326.5 L591.6 323.0 L589.2 323.7 L588.5 326.5 L586.1 330.1 L583.4 331.0 L581.6 333.3 L576.1 333.7 L572.5 335.5Z M588.8 322.8 L590.6 320.1 L591.9 315.8 L595.2 317.9 L598.5 318.3 L597.9 320.1 L595.2 321.9 L591.6 321.0Z M570.7 337.3 L573.8 337.1 L573.4 340.9 L571.2 341.5 L570.3 338.6Z M575.2 336.8 L578.8 336.1 L578.3 337.3 L576.1 338.2Z M592.5 299.7 L594.3 302.0 L594.8 307.4 L595.2 312.9 L592.8 314.7 L592.5 311.1 L592.5 305.6 L592.1 302.0Z M554.3 352.4 L556.1 353.1 L554.0 358.2 L552.9 356.3Z M532.0 363.0 L535.2 361.8 L536.1 362.7 L533.4 365.0Z M479.8 380.3 L482.2 382.6 L483.1 385.3 L480.7 387.1 L479.5 385.3Z M324.1 307.3 L328.1 306.9 L332.7 306.0 L336.9 305.3 L335.4 304.7 L337.6 302.6 L335.0 302.0 L334.1 300.2 L331.8 298.4 L330.9 296.6 L329.1 296.6 L330.9 293.9 L328.1 293.5 L329.1 291.9 L325.4 291.9 L324.0 293.9 L324.5 296.6 L325.4 298.4 L328.1 298.6 L329.1 300.2 L329.1 301.5 L326.3 301.6 L326.9 303.3 L325.1 304.2 L328.1 304.7 L326.3 305.6Z M316.3 304.2 L320.0 304.4 L323.1 303.5 L323.6 301.1 L324.5 299.3 L322.7 298.0 L320.0 298.0 L319.1 299.5 L316.3 299.8 L316.7 301.5 L317.6 302.0 L316.3 303.3Z M354.5 254.9 L359.9 253.1 L370.8 252.2 L383.5 253.1 L378.1 254.9 L372.7 255.8 L369.0 257.6 L365.4 259.1 L360.8 257.6Z M428.1 268.5 L431.7 269.8 L438.1 270.0 L434.4 267.6 L436.2 264.9 L439.9 263.1 L445.3 261.3 L452.6 259.8 L458.9 258.9 L454.4 258.5 L447.1 259.8 L439.9 260.9 L435.3 263.1 L432.6 265.2 L429.0 267.6Z M419.9 252.7 L429.0 251.7 L439.9 250.4 L449.0 251.3 L443.5 252.7 L432.6 253.1Z M507.1 254.9 L512.5 252.2 L516.2 250.9 L525.2 254.0 L523.4 256.0 L516.2 255.3 L510.7 255.6Z M583.4 261.6 L588.8 260.4 L597.9 261.1 L607.0 261.8 L605.2 262.9 L594.3 262.5 L588.8 264.7 L585.2 263.1Z M658.8 269.4 L661.5 268.5 L661.5 269.8Z M180.1 358.3 L183.7 356.3 L187.4 356.0 L192.8 357.6 L197.3 360.3 L199.7 361.4 L193.7 362.0 L193.3 360.7 L190.1 358.9 L185.5 357.6 L181.9 358.5Z M199.3 364.7 L201.9 362.0 L204.6 362.0 L207.7 362.7 L210.2 364.3 L207.3 365.0 L204.6 365.9 L201.9 365.0Z M226.8 311.6 L230.0 306.5 L232.8 304.5 L233.7 306.5 L237.3 308.7 L238.6 312.0 L236.4 313.2 L233.7 312.9 L231.0 311.8Z M214.6 286.1 L217.3 283.0 L221.9 278.5 L219.1 275.8 L212.8 273.4 L209.2 270.7 L201.9 268.1 L192.8 266.2 L183.7 264.7 L174.6 264.9 L173.7 267.6 L180.1 269.0 L189.2 269.8 L196.4 271.2 L201.9 273.4 L207.3 275.8 L211.9 278.5 L214.6 281.2 L211.0 283.9 L212.8 285.7Z M121.9 268.5 L120.1 265.8 L127.4 265.8 L134.7 266.2 L140.1 265.4 L143.8 267.6 L149.2 270.3 L150.1 272.7 L143.8 273.6 L134.7 273.6 L127.4 272.5 L121.9 271.4 L125.6 270.3Z M107.4 268.0 L109.2 264.9 L112.9 263.4 L121.9 264.3 L123.8 265.8 L118.3 268.0 L112.9 269.0Z M196.4 259.4 L189.2 259.8 L176.5 259.4 L172.8 257.6 L176.5 255.8 L171.0 253.1 L167.4 250.8 L178.3 248.9 L192.8 247.7 L207.3 247.5 L221.9 248.6 L218.2 250.8 L207.3 252.6 L200.1 254.9 L194.6 256.7Z M189.2 262.7 L185.5 260.7 L174.6 259.6 L167.4 259.3 L160.1 261.1 L167.4 262.5 L178.3 263.1Z M121.9 261.8 L127.4 259.8 L138.3 260.4 L141.9 262.2 L134.7 263.1 L127.4 262.7Z M161.9 256.4 L167.4 254.0 L163.7 251.3 L171.0 252.7 L176.5 254.4 L171.0 256.2Z M161.0 267.6 L161.0 264.0 L169.2 264.0 L171.0 266.2 L165.6 268.0Z M149.2 268.0 L149.2 265.8 L154.7 264.3 L158.3 265.8 L158.3 268.1 L154.7 268.9Z M176.5 282.6 L179.2 278.8 L182.8 279.9 L188.3 282.5 L182.8 284.8 L179.2 283.5Z M153.7 273.0 L156.5 271.2 L160.1 272.1 L160.1 273.8 L155.6 273.9Z M145.6 261.6 L151.0 259.4 L158.3 260.0 L156.5 262.2 L149.2 262.2Z M192.8 280.6 L201.9 281.0 L207.3 284.3 L203.7 283.0 L198.2 282.3 L194.6 282.1Z M160.1 272.7 L162.8 268.5 L165.6 270.3 L167.4 273.0 L163.7 274.5Z M176.5 277.0 L179.2 271.9 L185.5 271.9 L186.4 274.3 L182.8 277.4Z M349.4 327.4 L349.8 324.1 L351.2 323.4 L352.3 324.6 L351.9 327.0 L350.9 327.5Z M350.1 322.8 L350.3 321.0 L351.6 320.1 L351.8 321.9 L351.2 323.0Z M357.2 329.2 L359.0 328.8 L362.8 328.8 L362.1 331.0 L360.8 331.5 L358.1 330.4Z M377.2 334.1 L379.0 333.5 L382.3 334.2 L379.9 334.8Z M393.2 334.6 L394.4 334.1 L397.2 333.5 L396.3 334.6 L394.4 335.3Z M365.4 524.6 L370.8 525.1 L379.9 525.3 L389.0 523.7 L394.4 522.6 L403.5 524.2 L407.2 523.0 L416.2 520.6 L425.3 518.6 L429.0 517.5 L434.4 517.9 L438.1 519.3 L449.0 520.2 L459.8 521.2 L461.7 523.0 L467.1 524.2 L470.8 524.2 L476.2 522.1 L483.5 519.3 L494.4 518.4 L507.1 518.1 L516.2 517.5 L525.2 518.4 L534.3 517.5 L539.8 517.2 L543.4 518.4 L552.5 519.0 L561.6 518.1 L570.7 517.5 L579.8 517.5 L588.8 518.8 L597.9 519.3 L607.0 522.1 L616.1 523.0 L625.2 524.8 L630.6 525.9 L636.1 525.9 L643.3 527.5 L643.3 530.2 L636.1 532.9 L630.6 535.6 L630.6 538.4 L634.2 539.3 L637.9 539.3 L643.3 540.0 L652.4 539.8 L661.5 539.6 L661.5 561.0 L7.5 561.0 L7.5 539.6 L25.7 540.4 L43.8 539.8 L52.9 538.4 L62.0 536.5 L71.1 534.7 L89.2 532.9 L107.4 531.7 L125.6 532.0 L143.8 530.2 L152.8 529.3 L171.0 529.8 L189.2 530.2 L198.2 528.4 L211.0 523.0 L216.4 517.5 L223.7 513.9 L231.0 512.8 L227.3 515.7 L221.9 519.3 L221.9 524.8 L223.7 530.2 L216.4 536.5 L198.2 539.3 L225.5 539.3 L252.8 539.3 L270.9 538.4 L283.6 535.6 L298.2 531.1 L312.7 527.5 L325.4 525.7 L334.5 523.9 L349.0 524.8 L356.3 524.8Z"/></clipPath></defs>
<rect x="6.3" y="233.8" width="656.4" height="328.4" fill="#0a0c12"/>
<path d="M6.5 561.8 H662.3 V234.0" stroke="#e8eaf0" stroke-width="1.2" fill="none"/>
<g clip-path="url(#mapclip)">
<rect x="7.5" y="235.0" width="654.0" height="326.0" fill="#5768b2"/>
<g clip-path="url(#visclip)"><rect x="7.5" y="235.0" width="654.0" height="326.0" fill="url(#dotsS)"/></g>
<path d="M29.3 279.2 L32.0 274.3 L38.4 273.0 L43.8 270.1 L50.2 268.9 L58.4 269.8 L67.4 270.9 L78.4 271.9 L87.4 273.2 L92.9 272.1 L100.1 271.0 L103.8 270.7 L107.4 272.1 L114.7 271.6 L121.9 273.0 L125.6 274.8 L134.7 275.0 L138.3 273.8 L143.8 274.3 L149.2 275.2 L156.5 274.8 L160.1 276.3 L163.7 277.0 L167.4 278.5 L170.1 280.3 L171.0 282.1 L167.4 284.3 L164.6 286.6 L162.6 289.3 L162.6 291.5 L166.1 294.8 L171.0 294.8 L174.6 296.0 L180.1 297.8 L185.0 298.2 L185.2 302.0 L187.4 304.2 L189.7 305.3 L191.3 302.9 L191.0 300.2 L190.1 298.8 L193.7 296.9 L195.3 294.2 L191.9 291.5 L193.7 289.3 L192.8 286.6 L192.8 285.0 L197.3 285.2 L201.0 285.3 L204.6 287.2 L207.7 287.5 L208.2 290.2 L211.0 292.1 L214.6 291.5 L216.4 289.7 L217.3 288.6 L220.1 292.1 L222.8 295.7 L225.5 297.5 L229.1 298.9 L231.0 300.9 L233.1 302.9 L232.8 304.5 L228.2 305.3 L225.5 306.9 L220.1 306.9 L213.7 307.1 L211.0 308.9 L208.2 311.1 L205.5 313.2 L208.2 311.8 L212.8 309.3 L216.4 308.9 L217.7 309.6 L215.5 311.1 L216.4 312.9 L217.1 314.1 L220.1 314.9 L222.8 315.2 L225.5 312.9 L225.5 315.1 L223.7 316.0 L219.1 317.2 L215.1 319.2 L214.2 317.8 L217.3 315.8 L214.6 316.1 L212.8 316.9 L209.2 318.3 L206.8 319.2 L205.9 320.8 L206.2 322.1 L207.3 322.5 L205.2 322.8 L202.8 323.4 L200.1 324.3 L199.9 325.9 L197.7 327.7 L196.6 330.4 L197.0 333.5 L195.5 335.2 L193.2 336.4 L191.0 337.5 L187.7 339.9 L186.6 342.4 L188.3 346.7 L189.0 349.5 L188.6 352.2 L187.2 352.4 L185.9 350.4 L184.3 347.7 L184.1 345.3 L181.9 343.7 L179.4 344.2 L177.4 342.9 L174.6 342.9 L172.3 343.3 L172.1 345.1 L169.5 345.1 L167.4 344.4 L164.1 344.2 L161.9 345.1 L159.2 346.7 L157.6 348.6 L157.9 351.3 L157.0 354.5 L156.8 357.6 L157.7 360.3 L159.4 363.0 L161.9 364.3 L163.7 365.0 L167.4 364.3 L169.5 363.0 L170.3 360.3 L173.7 359.1 L176.6 359.2 L175.5 362.1 L175.0 364.9 L174.1 368.1 L173.2 369.4 L178.3 369.4 L183.0 370.5 L182.8 375.4 L182.4 378.1 L184.6 381.2 L187.4 382.1 L190.1 380.8 L192.8 381.2 L194.1 382.6 L192.3 384.2 L189.2 384.8 L186.4 383.9 L183.7 383.0 L180.1 380.3 L178.6 378.1 L175.5 374.5 L172.8 373.7 L168.3 372.6 L164.6 369.7 L161.9 368.8 L158.3 369.2 L153.7 367.8 L149.2 365.6 L145.6 363.6 L142.8 361.4 L143.2 358.9 L141.4 355.8 L138.3 352.7 L135.8 350.0 L133.8 348.0 L130.7 345.5 L129.0 341.9 L125.9 340.6 L126.3 343.3 L129.2 346.4 L131.0 349.1 L132.3 351.8 L134.1 354.2 L135.6 356.2 L134.1 355.6 L130.7 352.7 L127.0 348.6 L125.6 345.8 L123.8 342.8 L121.8 339.1 L119.2 336.4 L115.6 335.5 L113.0 331.9 L112.0 329.5 L109.6 326.5 L108.7 324.8 L108.9 321.9 L109.2 317.4 L109.4 314.1 L108.0 310.5 L111.0 310.5 L112.0 312.3 L111.8 309.6 L110.7 308.7 L107.4 307.1 L102.9 305.6 L102.0 302.7 L98.3 299.7 L95.6 297.5 L92.0 294.4 L88.3 292.1 L85.6 291.9 L81.1 289.7 L76.5 289.3 L72.0 289.0 L68.4 287.5 L64.7 288.8 L62.0 290.4 L58.7 290.8 L61.5 287.3 L58.4 287.9 L55.6 290.2 L54.4 292.2 L50.2 294.2 L46.6 296.6 L42.0 297.8 L37.5 298.8 L35.1 299.1 L39.3 296.9 L42.9 296.2 L45.6 293.9 L48.4 291.7 L45.6 291.9 L42.9 291.5 L40.2 291.5 L40.2 289.3 L35.7 288.4 L33.8 286.6 L35.1 284.3 L38.4 283.5 L42.0 282.8 L42.0 281.2 L38.4 281.2 L32.0 280.6Z M201.9 256.2 L209.2 258.2 L207.3 260.4 L214.6 260.7 L225.5 260.4 L230.0 262.5 L233.7 265.8 L234.9 268.5 L240.0 271.2 L236.4 272.7 L241.8 273.4 L237.3 275.8 L238.2 278.5 L240.9 281.5 L243.7 284.8 L246.4 287.5 L250.9 288.4 L255.5 289.5 L256.7 286.6 L259.1 283.5 L261.3 280.6 L266.4 279.0 L270.9 278.1 L276.4 274.8 L283.6 274.3 L287.3 273.8 L292.7 271.2 L294.5 270.3 L289.1 268.5 L294.5 267.1 L292.7 264.9 L297.3 263.1 L299.1 260.4 L296.3 258.5 L300.9 256.7 L298.2 254.0 L303.6 252.7 L312.7 250.4 L305.4 249.5 L294.5 248.9 L280.0 246.8 L265.5 246.8 L250.9 248.0 L236.4 248.9 L225.5 249.5 L216.4 251.1 L221.9 252.6 L212.8 253.1 L216.4 254.4 L203.7 255.3Z M290.9 279.2 L294.5 277.7 L298.2 279.0 L301.8 278.1 L305.4 277.7 L308.0 279.2 L309.8 280.3 L307.2 281.5 L300.9 283.2 L297.3 282.6 L293.4 282.3 L294.5 281.0 L290.9 280.5 L293.6 279.7Z M318.1 331.0 L317.2 327.9 L318.5 323.7 L317.8 320.1 L320.0 318.9 L327.2 319.4 L331.2 319.4 L332.3 316.5 L332.3 314.7 L330.0 312.3 L326.3 311.1 L326.0 310.2 L329.1 309.6 L331.8 310.0 L331.2 308.0 L332.7 308.5 L334.9 308.4 L337.2 307.1 L337.4 305.8 L340.9 304.9 L342.7 302.9 L343.6 301.5 L347.2 301.1 L349.9 300.7 L350.3 299.3 L349.4 297.5 L349.4 294.8 L353.6 293.5 L353.6 295.7 L352.7 297.5 L352.7 299.3 L354.5 300.2 L357.2 299.5 L359.9 300.2 L364.5 299.3 L368.1 298.9 L370.5 299.5 L372.7 298.0 L372.7 295.1 L374.5 293.7 L377.2 294.8 L378.6 293.9 L378.6 292.4 L377.2 290.8 L381.7 290.2 L385.4 290.2 L389.0 289.3 L386.3 288.2 L381.7 288.6 L376.3 289.5 L373.6 288.4 L373.2 285.7 L373.6 283.5 L379.0 280.6 L380.5 279.4 L378.1 278.8 L374.5 279.0 L373.6 281.2 L371.7 282.5 L368.1 284.3 L365.9 285.7 L365.7 287.5 L368.1 289.3 L367.2 291.1 L364.8 293.0 L364.5 295.7 L362.7 296.4 L360.5 297.5 L358.1 297.7 L357.6 296.2 L355.9 293.9 L354.8 291.1 L353.6 290.6 L351.8 291.5 L349.0 292.8 L346.3 292.6 L344.5 291.1 L343.6 288.4 L343.6 285.7 L346.3 284.3 L349.9 283.0 L353.6 281.2 L356.3 279.4 L358.1 277.6 L360.8 275.8 L362.7 273.9 L366.3 272.5 L369.9 271.2 L374.5 270.7 L379.0 269.4 L383.5 269.4 L388.1 270.0 L390.8 270.7 L389.9 271.6 L394.4 272.3 L399.9 272.7 L407.2 275.2 L409.0 277.0 L406.3 278.1 L399.9 277.7 L394.4 277.2 L397.2 279.4 L397.7 281.2 L401.7 282.3 L403.5 281.2 L407.2 280.8 L408.1 279.0 L411.7 277.7 L414.4 278.1 L414.4 276.3 L413.5 273.9 L418.1 274.5 L418.1 276.7 L421.7 275.4 L426.2 274.5 L431.7 274.3 L433.5 274.5 L438.1 273.8 L443.5 273.0 L444.4 271.6 L450.8 272.5 L456.2 273.0 L456.2 271.2 L455.7 269.4 L458.9 268.0 L459.8 266.2 L464.4 265.8 L466.8 267.6 L465.3 270.3 L466.2 273.0 L468.4 274.8 L467.1 276.7 L465.3 277.9 L468.9 277.0 L470.4 274.8 L468.9 273.0 L468.4 270.3 L469.5 267.6 L470.8 266.3 L475.3 267.1 L479.8 267.2 L481.1 264.9 L488.9 264.3 L492.6 263.1 L490.7 262.2 L498.0 261.3 L507.1 260.4 L516.2 259.4 L524.0 257.3 L528.0 258.0 L528.9 259.4 L538.0 259.4 L540.7 261.3 L534.3 264.0 L539.8 264.5 L548.9 264.9 L558.0 264.9 L565.2 264.9 L567.0 267.6 L570.7 269.4 L574.3 268.5 L581.6 268.5 L588.8 266.7 L590.6 266.2 L599.7 267.1 L607.0 268.5 L612.5 269.6 L619.7 269.4 L625.2 271.2 L627.0 272.1 L634.2 272.1 L639.7 271.6 L644.2 273.0 L644.2 271.2 L654.2 271.6 L661.5 273.0 L661.5 280.3 L657.9 281.2 L656.1 284.8 L648.8 286.6 L643.3 289.3 L636.1 289.3 L630.6 293.0 L628.8 296.6 L629.7 298.8 L625.2 302.0 L621.5 304.7 L618.8 305.6 L617.9 302.0 L617.0 297.5 L617.9 294.8 L621.5 292.1 L625.2 289.3 L627.9 287.9 L630.6 286.6 L632.4 284.8 L625.2 286.6 L619.7 286.6 L616.1 290.2 L610.6 291.1 L605.2 290.2 L594.3 290.6 L588.8 293.9 L583.4 299.3 L585.2 300.6 L590.6 301.5 L590.6 303.8 L589.7 307.4 L588.8 311.1 L585.2 314.7 L580.7 318.3 L576.1 320.5 L572.5 321.0 L569.8 322.8 L569.8 325.6 L566.1 326.5 L567.9 329.2 L569.8 332.8 L568.9 334.6 L564.3 335.5 L564.3 331.9 L563.4 329.7 L561.6 329.2 L562.1 326.5 L559.8 325.6 L555.2 327.4 L556.1 324.6 L554.3 324.1 L550.7 327.0 L548.3 327.7 L550.7 330.1 L554.3 329.7 L557.0 330.4 L554.3 331.9 L551.6 334.2 L553.4 337.3 L555.8 340.4 L556.1 343.7 L555.2 346.4 L552.5 350.0 L550.7 352.7 L547.0 355.4 L541.6 357.6 L536.1 359.1 L534.3 360.9 L532.5 359.1 L528.0 360.9 L526.5 363.6 L528.9 367.2 L532.5 371.7 L533.1 376.3 L528.9 379.0 L525.2 382.2 L525.2 379.3 L521.6 378.1 L519.8 375.4 L517.1 373.5 L516.2 376.3 L514.9 379.9 L516.2 382.6 L518.0 385.7 L521.6 388.0 L522.5 391.7 L523.4 395.3 L521.6 395.3 L518.0 392.6 L516.7 388.0 L515.3 385.3 L513.1 383.5 L513.4 379.9 L513.4 376.3 L512.0 370.8 L511.6 368.1 L508.0 369.0 L505.8 369.0 L505.3 364.5 L501.6 360.0 L500.7 357.2 L498.0 358.2 L494.4 358.7 L492.6 360.0 L492.2 361.8 L488.9 362.7 L484.4 367.6 L480.2 369.9 L479.8 373.5 L479.5 379.3 L476.2 383.0 L474.4 383.1 L472.6 379.0 L470.4 374.5 L468.9 369.9 L467.1 365.4 L466.6 360.9 L466.2 359.1 L463.5 360.3 L459.8 357.6 L461.7 356.3 L458.9 355.4 L456.8 353.3 L455.3 352.0 L447.1 352.4 L439.9 351.6 L438.1 349.1 L433.5 349.8 L429.9 348.0 L426.6 344.6 L423.5 343.1 L421.7 344.0 L423.0 346.4 L425.3 349.6 L428.1 351.8 L428.2 354.2 L430.8 354.2 L433.5 354.0 L436.2 350.5 L437.1 353.1 L440.8 355.1 L443.1 357.2 L440.8 360.9 L439.3 363.6 L437.1 365.4 L434.4 367.2 L429.0 369.6 L423.5 372.3 L416.2 374.8 L413.5 375.0 L412.3 371.2 L411.7 368.1 L409.0 364.5 L405.7 360.0 L404.4 355.4 L401.7 351.8 L398.4 347.3 L397.7 344.6 L396.8 347.3 L395.0 345.8 L393.7 343.8 L393.4 341.5 L396.8 341.3 L398.1 338.6 L399.5 334.6 L399.9 331.7 L397.2 331.5 L393.5 332.6 L389.9 332.3 L387.2 331.7 L384.5 331.0 L382.6 328.3 L382.3 326.5 L382.1 325.2 L384.5 324.6 L387.2 323.7 L390.8 323.4 L395.4 321.9 L398.1 321.9 L401.7 323.4 L406.3 323.7 L409.9 322.8 L409.9 320.7 L407.2 319.2 L403.5 317.4 L401.7 316.0 L404.4 314.7 L405.3 312.5 L402.6 312.9 L398.1 314.3 L399.9 316.0 L398.1 316.9 L395.5 317.4 L393.9 315.2 L391.7 313.8 L389.0 315.1 L388.3 316.5 L386.6 318.3 L385.4 320.5 L385.4 322.3 L387.2 323.4 L385.4 323.7 L382.3 324.1 L379.0 324.1 L377.7 325.6 L375.9 324.8 L376.3 327.0 L378.1 329.2 L376.3 330.4 L375.9 331.9 L373.9 331.4 L373.2 329.2 L370.8 326.5 L369.7 323.7 L369.4 321.9 L366.3 320.1 L363.2 318.9 L360.8 316.1 L359.4 315.4 L356.8 316.0 L357.0 317.9 L359.2 319.2 L361.8 321.9 L363.6 322.3 L367.9 325.2 L367.2 325.6 L365.4 324.6 L364.7 326.1 L365.4 327.4 L363.9 329.2 L363.0 329.2 L363.6 327.4 L362.7 325.6 L360.3 324.3 L357.2 322.8 L353.6 320.5 L352.7 318.3 L350.3 317.6 L348.1 318.7 L343.6 319.6 L340.3 319.8 L340.3 321.9 L338.1 323.2 L335.4 324.6 L334.0 326.5 L334.5 327.9 L332.7 330.1 L330.9 331.4 L326.3 331.7 L324.5 332.8 L322.7 331.4 L320.9 330.6Z M7.5 273.0 L12.9 274.3 L20.2 276.7 L25.7 278.3 L23.9 279.4 L20.2 281.4 L14.8 280.6 L10.2 279.4 L7.5 280.3Z M323.8 333.2 L330.9 334.2 L334.5 333.2 L339.9 331.4 L347.2 331.0 L352.7 330.4 L354.5 331.0 L353.6 332.8 L354.1 335.5 L352.7 336.4 L354.5 337.9 L358.1 338.4 L362.3 339.5 L363.6 341.3 L367.2 342.8 L369.9 342.8 L370.8 340.0 L374.5 338.4 L379.9 340.4 L385.4 341.9 L389.0 340.9 L392.6 341.3 L393.7 343.7 L395.4 347.3 L397.2 350.9 L399.0 354.5 L401.7 359.1 L402.3 363.6 L404.4 365.4 L406.3 369.9 L409.0 371.7 L412.6 375.4 L413.2 377.2 L415.3 379.0 L419.9 377.7 L427.2 376.3 L427.5 379.0 L425.3 383.5 L421.7 388.9 L418.1 393.5 L412.6 398.0 L409.9 401.6 L407.2 404.3 L405.3 408.0 L406.3 411.6 L406.3 416.1 L408.1 421.5 L408.1 426.1 L403.5 429.7 L399.9 432.4 L398.1 435.1 L399.0 439.7 L398.1 442.4 L394.4 444.2 L394.1 447.8 L391.7 451.4 L389.0 455.1 L385.4 457.8 L381.2 459.6 L374.5 459.9 L370.8 461.0 L368.1 459.9 L367.2 456.9 L365.4 452.3 L362.7 446.9 L360.8 439.7 L358.1 434.2 L355.9 428.8 L357.2 423.4 L359.6 417.9 L358.1 413.4 L356.3 408.0 L351.8 401.6 L351.4 396.2 L352.3 391.7 L349.9 389.9 L345.4 390.2 L342.7 386.6 L337.2 386.8 L330.9 388.9 L325.4 388.6 L320.9 390.0 L316.3 386.8 L310.9 382.6 L307.2 378.1 L303.6 375.4 L302.7 371.4 L304.5 368.1 L304.9 363.6 L303.6 360.0 L305.4 355.4 L308.2 350.9 L310.9 347.7 L315.4 345.5 L316.7 341.9 L319.1 337.9 L322.7 335.5Z M424.1 419.7 L425.9 426.1 L424.4 430.6 L421.7 437.8 L419.9 443.3 L416.2 444.2 L413.9 440.6 L413.5 436.9 L415.3 433.3 L414.4 428.8 L418.1 426.6 L421.7 422.4Z M540.7 437.8 L541.6 445.1 L543.4 452.3 L543.4 458.7 L545.2 461.4 L548.9 461.4 L552.5 459.6 L559.8 457.8 L565.2 456.3 L572.5 455.1 L577.9 457.4 L580.7 461.0 L584.3 457.8 L585.2 460.5 L587.9 463.2 L590.6 466.8 L595.2 468.3 L599.7 468.6 L603.4 466.5 L607.0 465.4 L608.8 459.6 L612.5 454.1 L613.4 448.7 L612.5 444.2 L608.8 440.6 L606.1 437.8 L602.5 433.3 L599.7 431.5 L598.8 425.2 L596.1 423.7 L594.3 417.9 L592.5 417.9 L591.6 423.4 L590.6 428.8 L587.9 429.7 L584.3 427.0 L581.2 425.2 L582.5 419.7 L576.1 418.8 L572.5 420.1 L569.8 425.2 L566.1 423.4 L562.5 424.3 L558.9 428.8 L556.1 430.6 L554.3 433.3 L548.9 434.9 L544.3 436.0Z M597.4 471.7 L603.4 471.9 L603.7 474.1 L601.5 476.8 L599.7 476.8 L597.9 474.1Z M648.2 460.5 L651.5 464.1 L654.2 465.9 L658.8 466.3 L656.1 469.5 L653.3 473.2 L652.1 472.8 L652.4 470.4 L650.2 469.2 L652.1 466.8 L651.5 465.0 L648.8 461.8Z M648.2 471.4 L651.0 473.7 L648.8 476.8 L645.1 478.6 L644.2 481.3 L640.6 482.4 L637.0 481.3 L639.7 478.2 L644.2 475.9 L647.0 473.2Z M572.5 399.4 L577.9 399.4 L579.8 404.0 L585.2 401.1 L590.6 402.7 L597.0 404.9 L599.7 408.0 L603.0 409.8 L603.4 412.5 L607.9 417.0 L603.4 416.3 L599.7 413.9 L596.1 411.9 L594.3 414.3 L590.6 414.5 L587.0 412.5 L585.2 413.0 L586.1 409.8 L584.3 407.1 L580.7 406.0 L576.1 405.2 L575.2 403.1 L577.9 402.5 L574.3 401.6Z M532.5 395.3 L534.3 394.9 L536.7 393.5 L539.8 392.2 L542.5 389.5 L545.2 386.2 L547.0 385.3 L548.3 386.8 L550.7 388.6 L548.9 390.2 L548.5 393.5 L550.3 396.2 L548.0 398.0 L546.1 401.3 L545.2 404.3 L542.5 405.2 L539.8 403.8 L537.1 404.0 L534.3 401.3 L532.5 398.4Z M507.6 387.9 L511.6 388.6 L516.7 393.5 L521.6 397.1 L524.3 401.3 L527.1 403.8 L526.7 408.5 L524.3 408.5 L520.3 405.2 L517.6 402.0 L514.4 397.1 L511.6 393.5Z M525.6 410.3 L528.9 408.9 L531.6 410.1 L535.2 410.5 L539.2 410.7 L542.5 412.1 L542.3 413.8 L537.1 413.0 L531.6 412.1 L528.0 411.4Z M551.6 408.0 L551.2 403.4 L550.7 399.8 L552.5 396.6 L556.1 396.2 L561.6 395.3 L559.8 397.3 L554.3 397.5 L553.0 399.6 L555.2 399.8 L558.5 399.4 L555.8 401.6 L557.0 404.3 L558.0 407.1 L556.1 406.7 L554.3 403.4 L553.4 403.4 L553.2 408.0Z M553.4 364.5 L556.5 364.7 L556.1 369.0 L555.2 372.6 L559.8 374.5 L558.9 375.4 L556.1 373.2 L553.4 372.6 L552.5 369.0Z M556.1 385.3 L558.9 382.6 L562.5 380.8 L564.3 384.4 L563.4 386.6 L562.1 387.1 L559.8 385.3Z M556.1 376.6 L558.5 377.5 L562.1 375.5 L562.5 379.0 L559.8 379.9 L558.0 381.2 L557.0 379.0Z M547.4 382.6 L551.6 377.5 L551.2 379.5 L548.5 382.8Z M572.3 336.4 L574.3 335.5 L579.8 335.2 L583.4 335.2 L587.0 334.6 L590.3 333.3 L590.6 329.2 L592.5 326.5 L591.6 323.0 L589.2 323.7 L588.5 326.5 L586.1 330.1 L583.4 331.0 L581.6 333.3 L576.1 333.7 L572.5 335.5Z M588.8 322.8 L590.6 320.1 L591.9 315.8 L595.2 317.9 L598.5 318.3 L597.9 320.1 L595.2 321.9 L591.6 321.0Z M570.7 337.3 L573.8 337.1 L573.4 340.9 L571.2 341.5 L570.3 338.6Z M575.2 336.8 L578.8 336.1 L578.3 337.3 L576.1 338.2Z M592.5 299.7 L594.3 302.0 L594.8 307.4 L595.2 312.9 L592.8 314.7 L592.5 311.1 L592.5 305.6 L592.1 302.0Z M554.3 352.4 L556.1 353.1 L554.0 358.2 L552.9 356.3Z M532.0 363.0 L535.2 361.8 L536.1 362.7 L533.4 365.0Z M479.8 380.3 L482.2 382.6 L483.1 385.3 L480.7 387.1 L479.5 385.3Z M324.1 307.3 L328.1 306.9 L332.7 306.0 L336.9 305.3 L335.4 304.7 L337.6 302.6 L335.0 302.0 L334.1 300.2 L331.8 298.4 L330.9 296.6 L329.1 296.6 L330.9 293.9 L328.1 293.5 L329.1 291.9 L325.4 291.9 L324.0 293.9 L324.5 296.6 L325.4 298.4 L328.1 298.6 L329.1 300.2 L329.1 301.5 L326.3 301.6 L326.9 303.3 L325.1 304.2 L328.1 304.7 L326.3 305.6Z M316.3 304.2 L320.0 304.4 L323.1 303.5 L323.6 301.1 L324.5 299.3 L322.7 298.0 L320.0 298.0 L319.1 299.5 L316.3 299.8 L316.7 301.5 L317.6 302.0 L316.3 303.3Z M354.5 254.9 L359.9 253.1 L370.8 252.2 L383.5 253.1 L378.1 254.9 L372.7 255.8 L369.0 257.6 L365.4 259.1 L360.8 257.6Z M428.1 268.5 L431.7 269.8 L438.1 270.0 L434.4 267.6 L436.2 264.9 L439.9 263.1 L445.3 261.3 L452.6 259.8 L458.9 258.9 L454.4 258.5 L447.1 259.8 L439.9 260.9 L435.3 263.1 L432.6 265.2 L429.0 267.6Z M419.9 252.7 L429.0 251.7 L439.9 250.4 L449.0 251.3 L443.5 252.7 L432.6 253.1Z M507.1 254.9 L512.5 252.2 L516.2 250.9 L525.2 254.0 L523.4 256.0 L516.2 255.3 L510.7 255.6Z M583.4 261.6 L588.8 260.4 L597.9 261.1 L607.0 261.8 L605.2 262.9 L594.3 262.5 L588.8 264.7 L585.2 263.1Z M658.8 269.4 L661.5 268.5 L661.5 269.8Z M180.1 358.3 L183.7 356.3 L187.4 356.0 L192.8 357.6 L197.3 360.3 L199.7 361.4 L193.7 362.0 L193.3 360.7 L190.1 358.9 L185.5 357.6 L181.9 358.5Z M199.3 364.7 L201.9 362.0 L204.6 362.0 L207.7 362.7 L210.2 364.3 L207.3 365.0 L204.6 365.9 L201.9 365.0Z M226.8 311.6 L230.0 306.5 L232.8 304.5 L233.7 306.5 L237.3 308.7 L238.6 312.0 L236.4 313.2 L233.7 312.9 L231.0 311.8Z M214.6 286.1 L217.3 283.0 L221.9 278.5 L219.1 275.8 L212.8 273.4 L209.2 270.7 L201.9 268.1 L192.8 266.2 L183.7 264.7 L174.6 264.9 L173.7 267.6 L180.1 269.0 L189.2 269.8 L196.4 271.2 L201.9 273.4 L207.3 275.8 L211.9 278.5 L214.6 281.2 L211.0 283.9 L212.8 285.7Z M121.9 268.5 L120.1 265.8 L127.4 265.8 L134.7 266.2 L140.1 265.4 L143.8 267.6 L149.2 270.3 L150.1 272.7 L143.8 273.6 L134.7 273.6 L127.4 272.5 L121.9 271.4 L125.6 270.3Z M107.4 268.0 L109.2 264.9 L112.9 263.4 L121.9 264.3 L123.8 265.8 L118.3 268.0 L112.9 269.0Z M196.4 259.4 L189.2 259.8 L176.5 259.4 L172.8 257.6 L176.5 255.8 L171.0 253.1 L167.4 250.8 L178.3 248.9 L192.8 247.7 L207.3 247.5 L221.9 248.6 L218.2 250.8 L207.3 252.6 L200.1 254.9 L194.6 256.7Z M189.2 262.7 L185.5 260.7 L174.6 259.6 L167.4 259.3 L160.1 261.1 L167.4 262.5 L178.3 263.1Z M121.9 261.8 L127.4 259.8 L138.3 260.4 L141.9 262.2 L134.7 263.1 L127.4 262.7Z M161.9 256.4 L167.4 254.0 L163.7 251.3 L171.0 252.7 L176.5 254.4 L171.0 256.2Z M161.0 267.6 L161.0 264.0 L169.2 264.0 L171.0 266.2 L165.6 268.0Z M149.2 268.0 L149.2 265.8 L154.7 264.3 L158.3 265.8 L158.3 268.1 L154.7 268.9Z M176.5 282.6 L179.2 278.8 L182.8 279.9 L188.3 282.5 L182.8 284.8 L179.2 283.5Z M153.7 273.0 L156.5 271.2 L160.1 272.1 L160.1 273.8 L155.6 273.9Z M145.6 261.6 L151.0 259.4 L158.3 260.0 L156.5 262.2 L149.2 262.2Z M192.8 280.6 L201.9 281.0 L207.3 284.3 L203.7 283.0 L198.2 282.3 L194.6 282.1Z M160.1 272.7 L162.8 268.5 L165.6 270.3 L167.4 273.0 L163.7 274.5Z M176.5 277.0 L179.2 271.9 L185.5 271.9 L186.4 274.3 L182.8 277.4Z M349.4 327.4 L349.8 324.1 L351.2 323.4 L352.3 324.6 L351.9 327.0 L350.9 327.5Z M350.1 322.8 L350.3 321.0 L351.6 320.1 L351.8 321.9 L351.2 323.0Z M357.2 329.2 L359.0 328.8 L362.8 328.8 L362.1 331.0 L360.8 331.5 L358.1 330.4Z M377.2 334.1 L379.0 333.5 L382.3 334.2 L379.9 334.8Z M393.2 334.6 L394.4 334.1 L397.2 333.5 L396.3 334.6 L394.4 335.3Z M365.4 524.6 L370.8 525.1 L379.9 525.3 L389.0 523.7 L394.4 522.6 L403.5 524.2 L407.2 523.0 L416.2 520.6 L425.3 518.6 L429.0 517.5 L434.4 517.9 L438.1 519.3 L449.0 520.2 L459.8 521.2 L461.7 523.0 L467.1 524.2 L470.8 524.2 L476.2 522.1 L483.5 519.3 L494.4 518.4 L507.1 518.1 L516.2 517.5 L525.2 518.4 L534.3 517.5 L539.8 517.2 L543.4 518.4 L552.5 519.0 L561.6 518.1 L570.7 517.5 L579.8 517.5 L588.8 518.8 L597.9 519.3 L607.0 522.1 L616.1 523.0 L625.2 524.8 L630.6 525.9 L636.1 525.9 L643.3 527.5 L643.3 530.2 L636.1 532.9 L630.6 535.6 L630.6 538.4 L634.2 539.3 L637.9 539.3 L643.3 540.0 L652.4 539.8 L661.5 539.6 L661.5 561.0 L7.5 561.0 L7.5 539.6 L25.7 540.4 L43.8 539.8 L52.9 538.4 L62.0 536.5 L71.1 534.7 L89.2 532.9 L107.4 531.7 L125.6 532.0 L143.8 530.2 L152.8 529.3 L171.0 529.8 L189.2 530.2 L198.2 528.4 L211.0 523.0 L216.4 517.5 L223.7 513.9 L231.0 512.8 L227.3 515.7 L221.9 519.3 L221.9 524.8 L223.7 530.2 L216.4 536.5 L198.2 539.3 L225.5 539.3 L252.8 539.3 L270.9 538.4 L283.6 535.6 L298.2 531.1 L312.7 527.5 L325.4 525.7 L334.5 523.9 L349.0 524.8 L356.3 524.8Z" fill="#e0e0e0"/>
<path d="M392.1 397.5 L394.4 397.3 L396.6 398.5 L395.9 401.6 L394.1 403.1 L392.3 402.2 L392.1 399.8Z M387.5 404.2 L388.6 406.1 L390.5 412.5 L389.9 413.8 L388.1 409.8 L387.2 406.1Z M396.3 415.4 L397.4 417.0 L398.4 422.4 L397.7 423.7 L396.8 419.7 L396.1 417.0Z M419.9 316.5 L423.5 313.8 L427.2 312.9 L430.8 313.8 L430.8 316.5 L427.2 317.4 L426.2 320.1 L429.9 321.9 L430.8 324.6 L432.6 326.5 L432.6 330.1 L429.0 331.4 L425.3 330.3 L423.5 328.3 L424.4 325.0 L421.7 321.9 L419.9 319.2Z M440.8 316.5 L442.6 313.6 L446.2 314.0 L445.9 317.4 L442.6 319.0 L440.8 318.3Z M523.1 304.5 L526.2 302.7 L529.8 301.1 L533.1 297.8 L534.3 297.1 L533.1 300.2 L530.7 302.4 L527.1 304.2Z M167.4 313.2 L171.0 311.4 L174.6 309.8 L179.2 311.1 L180.8 313.6 L177.4 313.8 L174.6 312.9 L170.1 313.4Z M174.6 321.9 L175.0 318.3 L177.4 315.1 L180.1 315.1 L177.9 318.3 L177.4 321.9Z M181.0 314.7 L185.5 314.7 L189.2 316.5 L186.4 317.4 L185.9 319.8 L184.4 319.8 L182.8 318.3 L183.2 316.1Z M183.2 322.7 L186.4 321.2 L191.0 320.3 L191.0 320.8 L187.4 322.7 L184.6 323.0Z M189.5 319.6 L192.8 318.9 L195.9 318.3 L195.9 319.2 L192.8 319.6Z M107.4 278.5 L112.9 276.7 L118.3 276.7 L119.2 278.8 L114.7 280.3 L110.1 279.7Z M121.9 287.5 L125.6 285.2 L131.0 284.3 L135.6 284.4 L131.9 286.1 L127.4 287.5 L123.8 287.9Z M154.7 300.6 L156.5 300.4 L159.6 305.3 L158.6 306.7 L155.6 302.9Z" fill="#5768b2"/>
<g clip-path="url(#visclip)"><g clip-path="url(#landclip)"><rect x="7.5" y="235.0" width="654.0" height="326.0" fill="url(#dotsL)"/></g></g>
<path d="M34.8 235.0 V561.0 M62.0 235.0 V561.0 M89.2 235.0 V561.0 M116.5 235.0 V561.0 M143.8 235.0 V561.0 M171.0 235.0 V561.0 M198.2 235.0 V561.0 M225.5 235.0 V561.0 M252.8 235.0 V561.0 M280.0 235.0 V561.0 M307.2 235.0 V561.0 M334.5 235.0 V561.0 M361.8 235.0 V561.0 M389.0 235.0 V561.0 M416.2 235.0 V561.0 M443.5 235.0 V561.0 M470.8 235.0 V561.0 M498.0 235.0 V561.0 M525.2 235.0 V561.0 M552.5 235.0 V561.0 M579.8 235.0 V561.0 M607.0 235.0 V561.0 M634.2 235.0 V561.0 M7.5 262.2 H661.5 M7.5 289.3 H661.5 M7.5 316.5 H661.5 M7.5 343.7 H661.5 M7.5 370.8 H661.5 M7.5 398.0 H661.5 M7.5 425.2 H661.5 M7.5 452.3 H661.5 M7.5 479.5 H661.5 M7.5 506.7 H661.5 M7.5 533.8 H661.5" stroke="#c8d0f4" stroke-opacity="0.33" stroke-width="1" fill="none"/>
<path d="M160.0 268.6 L161.4 267.7 L163.4 266.4 L166.0 265.0 L169.4 263.6 L173.3 262.2 L176.8 261.0 L179.5 260.0 L181.7 259.2 L184.0 258.5 L186.3 257.9 L188.5 257.3 L191.0 256.7 L193.7 256.0 L196.6 255.2 L200.0 254.4 L204.2 253.5 L209.0 252.6 L214.0 251.8 L219.2 251.0 L224.6 250.3 L230.0 249.7 L234.9 249.1 L239.8 248.6 L245.5 248.2 L252.5 247.8 L260.2 247.5 L268.0 247.2 L275.6 246.9 L283.3 246.7 L291.0 246.5 L298.7 246.5 L306.4 246.6 L314.0 246.7 L321.7 246.8 L329.3 247.0 L336.7 247.2 L343.7 247.5 L350.3 247.8 L357.0 248.2 L363.7 248.7 L370.3 249.2 L377.0 249.7 L384.6 250.3 L392.2 251.0 L397.5 251.5" stroke="#e01828" stroke-width="1.7" stroke-dasharray="1.8 5" fill="none"/>
<path d="M397.5 251.5 L399.4 251.9 L402.1 252.3 L405.3 252.9 L408.7 253.6 L412.0 254.2 L415.0 254.8 L417.7 255.4 L420.4 255.9 L423.0 256.5 L425.6 257.1 L428.0 257.7 L430.4 258.4 L432.7 259.1 L434.8 259.8 L436.9 260.5 L438.9 261.2 L440.9 262.1 L443.0 263.0 L445.1 264.1" stroke="#e01020" stroke-width="1.3" fill="none" stroke-linejoin="round"/>
<path d="M425.6 257.1 L428.0 257.7 L430.4 258.4 L432.7 259.1 L434.8 259.8 L436.9 260.5 L438.9 261.2 L440.9 262.1 L443.0 263.0 L445.1 264.1 L447.3 265.3 L449.5 266.6 L451.7 267.9 L453.7 269.2 L455.7 270.5 L457.5 271.7 L459.3 272.9 L460.9 274.0 L462.5 275.2 L464.1 276.5 L465.8 278.0 L467.5 279.7 L469.2 281.5 L470.9 283.5 L472.6 285.5 L474.3 287.5 L476.0 289.5 L477.7 291.4 L479.3 293.4 L481.0 295.3 L482.7 297.3 L484.3 299.2 L486.0 301.0 L487.7 302.8 L489.3 304.5 L491.0 306.2 L492.7 307.8 L494.3 309.4 L496.0 311.0 L497.7 312.6 L499.3 314.2 L501.0 315.8 L502.6 317.3 L504.3 318.7 L506.0 320.0 L507.7 321.2 L509.5 322.2 L511.2 323.2 L513.0 324.2 L514.8 325.1 L516.5 326.0 L518.3 327.0 L520.3 328.0 L522.2 329.0 L524.0 330.0 L525.5 330.7 L526.6 331.3" stroke="#e01020" stroke-width="2.1" fill="none" stroke-linejoin="round" stroke-linecap="round"/>
</g>
<rect x="529.2" y="332.3" width="1.6" height="1.6" fill="#e01020"/><rect x="534.6" y="335" width="1.6" height="1.6" fill="#e01020"/>
<rect x="465.4" y="279.2" width="1.8" height="1.8" fill="#000"/>
<text x="472.7" y="284.0" font-size="10" fill="#000" font-weight="bold" textLength="51.8" lengthAdjust="spacingAndGlyphs">01.08.2008</text>
<rect x="351.3" y="306.3" width="2.6" height="2.6" fill="#0a0ac8"/>
<text x="669.5" y="245.0" font-size="11.6" fill="#f2f2f2" textLength="58.5" lengthAdjust="spacingAndGlyphs">Verauf totale</text>
<text x="669.5" y="259.4" font-size="11.6" fill="#f2f2f2" textLength="49.5" lengthAdjust="spacingAndGlyphs">Finsternis:</text>
<path d="M727 255.4 H740.5" stroke="#d81020" stroke-width="1.8"/>
<circle cx="769.2" cy="243.9" r="11.7" fill="#04200a"/>
<circle cx="768.9000000000001" cy="243.6" r="10.5" fill="url(#grn)"/>
<circle cx="769.2" cy="243.9" r="7.5" fill="none" stroke="#ffffff" stroke-opacity="0.22" stroke-width="1"/>
<text x="769.2" y="248.8" font-size="13.5" font-weight="bold" fill="#3a1a08" text-anchor="middle">G</text>
<text x="669.5" y="273.0" font-size="11.6" fill="#f2f2f2" textLength="86.5" lengthAdjust="spacingAndGlyphs">Verlauf ringförmige</text>
<text x="669.5" y="286.8" font-size="11.6" fill="#f2f2f2" textLength="49.5" lengthAdjust="spacingAndGlyphs">Finsternis:</text>
<path d="M727 283 H741" stroke="#d890dc" stroke-width="1.8"/>
<text x="669.5" y="301.0" font-size="11.6" fill="#f2f2f2" textLength="35.9" lengthAdjust="spacingAndGlyphs">partielle</text>
<text x="669.5" y="313.4" font-size="11.6" fill="#f2f2f2" textLength="58.0" lengthAdjust="spacingAndGlyphs">Sichtbarkeit:</text>
<rect x="732" y="298.5" width="15" height="15" fill="#495157"/>
<rect x="732" y="298.5" width="15" height="15" fill="url(#dots2)"/>
<rect x="752.5" y="301.5" width="9.5" height="9.5" fill="#eef1f6" stroke="#7d8496" stroke-width="1"/>
<path d="M754.5 306.25 L756.49 308.8 L760.2 303.5" fill="none" stroke="#4454b0" stroke-width="1.6"/>
<text x="765.7" y="309.0" font-size="9.6" fill="#f2f2f2" textLength="12.7" lengthAdjust="spacingAndGlyphs">AN</text>
<text x="669.5" y="332.3" font-size="11.6" fill="#f2f2f2" textLength="15.5" lengthAdjust="spacingAndGlyphs">Ort:</text>
<rect x="689" y="326" width="5.6" height="5.8" fill="#1010c0"/>
<rect x="704.3" y="324" width="9.5" height="9.5" fill="#eef1f6" stroke="#7d8496" stroke-width="1"/>
<path d="M706.3 328.75 L708.29 331.3 L712.0 326" fill="none" stroke="#4454b0" stroke-width="1.6"/>
<text x="721.6" y="331.3" font-size="9.6" fill="#f2f2f2" textLength="36.4" lengthAdjust="spacingAndGlyphs">zeige Ort</text>
<text x="669.5" y="349.0" font-size="11.6" fill="#f2f2f2" textLength="74.9" lengthAdjust="spacingAndGlyphs">Koordinaten 2D:</text>
<text x="669.5" y="361.7" font-size="10.6" fill="#f2f2f2" textLength="38.0" lengthAdjust="spacingAndGlyphs">73,76° N</text>
<text x="724.0" y="361.7" font-size="10.6" fill="#f2f2f2" textLength="44.0" lengthAdjust="spacingAndGlyphs">-29,51° W</text>
<rect x="684" y="374.8" width="9.5" height="9.5" fill="#eef1f6" stroke="#7d8496" stroke-width="1"/>
<path d="M686 379.55 L687.99 382.1 L691.7 376.8" fill="none" stroke="#4454b0" stroke-width="1.6"/>
<text x="702.4" y="382.0" font-size="9.6" fill="#f2f2f2" textLength="62.3" lengthAdjust="spacingAndGlyphs">Karte Gitternetz</text>
<rect x="684" y="391.3" width="9.5" height="9.5" fill="#eef1f6" stroke="#7d8496" stroke-width="1"/>
<path d="M686 396.05 L687.99 398.6 L691.7 393.3" fill="none" stroke="#4454b0" stroke-width="1.6"/>
<text x="702.4" y="397.6" font-size="9.6" fill="#f2f2f2" textLength="45.6" lengthAdjust="spacingAndGlyphs">Bez. Datum</text>
<g transform="translate(682 412.8) scale(0.9454545454545454)"><rect x="0.4" y="0.4" width="10.2" height="10.2" rx="0.8" fill="#a4cdfb" stroke="#2a62c8" stroke-width="0.9"/><rect x="2.4" y="1" width="6.2" height="3.8" fill="#f4f9ff" stroke="#3a72d0" stroke-width="0.6"/><path d="M3.4 2.4 H7.6" stroke="#3a72d0" stroke-width="0.7"/><rect x="2.6" y="6.5" width="5.8" height="4.1" fill="#2f64c4"/><rect x="4" y="7.6" width="1.7" height="3" fill="#0e1f48"/></g>
<text x="702.4" y="420.4" font-size="9.6" fill="#f2f2f2" textLength="68.4" lengthAdjust="spacingAndGlyphs">als Bild speichern</text>
<path d="M680.5 430.5 H691 L694.5 434 V446.5 H680.5 Z" fill="#dfe7f3" stroke="#9aa3b4" stroke-width="0.7"/>
<path d="M684.6 435.8 L689.8 441 M689.8 435.8 L684.6 441" stroke="#e02a20" stroke-width="2"/>
<text x="704.0" y="442.0" font-size="9.6" fill="#f2f2f2" textLength="45.5" lengthAdjust="spacingAndGlyphs">Lösche Bild</text>
<rect x="689.3" y="464.8" width="68" height="74" fill="#1a1c22"/>
<rect x="690.4" y="465.8" width="66.0" height="39.5" rx="1.8" fill="url(#btn)" stroke="#f6f6f6" stroke-width="1"/>
<rect x="691.4" y="466.8" width="64.0" height="37.5" rx="1.2" fill="none" stroke="#a4a4a6" stroke-opacity="0.9" stroke-width="0.9"/>
<text x="723.4" y="476.8" font-size="10.4" fill="#1c1c1c" text-anchor="middle" textLength="58.7" lengthAdjust="spacingAndGlyphs">Zeitübernahme</text>
<text x="723.4" y="488.3" font-size="10.4" fill="#1c1c1c" text-anchor="middle" textLength="49" lengthAdjust="spacingAndGlyphs">für Maximum</text>
<text x="723.4" y="499.6" font-size="10.4" fill="#1c1c1c" text-anchor="middle" textLength="36.5" lengthAdjust="spacingAndGlyphs">Heimatort</text>
<rect x="690.4" y="507.3" width="66.0" height="14.300000000000011" rx="1.8" fill="url(#btn)" stroke="#f6f6f6" stroke-width="1"/>
<rect x="691.4" y="508.3" width="64.0" height="12.300000000000011" rx="1.2" fill="none" stroke="#a4a4a6" stroke-opacity="0.9" stroke-width="0.9"/>
<text x="723.4" y="518.2" font-size="10.4" fill="#1c1c1c" text-anchor="middle" textLength="50.6" lengthAdjust="spacingAndGlyphs">Maximum Ort</text>
<rect x="690.4" y="523.4" width="66.0" height="14.399999999999977" rx="1.8" fill="url(#btn)" stroke="#f6f6f6" stroke-width="1"/>
<rect x="691.4" y="524.4" width="64.0" height="12.399999999999977" rx="1.2" fill="none" stroke="#a4a4a6" stroke-opacity="0.9" stroke-width="0.9"/>
<text x="723.4" y="534.3" font-size="10.4" fill="#1c1c1c" text-anchor="middle" textLength="36.5" lengthAdjust="spacingAndGlyphs">Heimatort</text>
<text x="670.0" y="557.0" font-size="12" fill="#a2a7ee" textLength="107.3" lengthAdjust="spacingAndGlyphs">&gt;&gt;  NASA - homepage</text>
<path d="M670 558.8 H777.3" stroke="#a2a7ee" stroke-width="0.9"/>
<rect x="7" y="368" width="359.5" height="359.5" rx="5" fill="#b4b8c2"/>
<rect x="8.2" y="369.2" width="357" height="357" rx="4" fill="url(#ttl)"/>
<rect x="8.2" y="369.2" width="357" height="21" rx="4" fill="url(#ttlh)"/>
<rect x="9" y="390.5" width="355" height="335" fill="#000"/>
<defs><clipPath id="cc"><rect x="9" y="390.5" width="355" height="335"/></clipPath></defs>
<g clip-path="url(#cc)"><rect x="9" y="390.5" width="355" height="335" fill="url(#glow)"/><rect x="140" y="480" width="80" height="70" fill="url(#glow2)"/>
<circle cx="187" cy="558.2" r="46.3" fill="#ffff00" stroke="#1a1a00" stroke-width="1"/>
<circle cx="126.6" cy="515.6" r="47.8" fill="#1e1e1e" stroke="#000" stroke-width="1.1"/></g>
<g transform="translate(17.2 379.2) rotate(-47)"><rect x="-6.3" y="-1.9" width="12.6" height="3.8" rx="1.5" fill="#f2f4f8" stroke="#7a808c" stroke-width="1"/></g>
<text x="27.0" y="384.0" font-size="11.8" fill="#444852" textLength="216.5" lengthAdjust="spacingAndGlyphs">Sicht von Heimat-Ort:  01.08.2008  /  11:33:32 [lok.]</text>
<path d="M285.3 369.2 H361.3 V380.2 Q361.3 383.2 358.3 383.2 H288.3 Q285.3 383.2 285.3 380.2 Z" fill="#ffffff" fill-opacity="0.3" stroke="#8a93a2" stroke-width="1"/>
<path d="M305.3 369.2 V383.2 M326.3 369.2 V383.2" stroke="#949cab" stroke-width="1" fill="none"/>
<rect x="290.3" y="376.4" width="10.0" height="3.6" rx="1" fill="#fff" stroke="#747a86" stroke-width="1"/>
<rect x="311.3" y="372.6" width="9.0" height="7.4" rx="1" fill="#f4f6fa" stroke="#6b7280" stroke-width="1"/>
<rect x="313.6" y="374.8" width="4.4" height="3.0" fill="#c9d1de" stroke="#6b7280" stroke-width="0.8"/>
<path d="M340.3 373.2 L347.3 379.2 M347.3 373.2 L340.3 379.2" stroke="#6a707c" stroke-width="3.6" stroke-linecap="square" fill="none"/>
<path d="M340.3 373.2 L347.3 379.2 M347.3 373.2 L340.3 379.2" stroke="#ffffff" stroke-width="1.9" stroke-linecap="square" fill="none"/>
<text x="27.8" y="408.0" font-size="10.8" fill="#fff" textLength="297.2" lengthAdjust="spacingAndGlyphs">Sicht von 10,14° O   50,0969° N   01.08.2008  /  11:33:32 [lok.]</text>
<text x="27.8" y="421.3" font-size="10.8" fill="#fff" textLength="68.5" lengthAdjust="spacingAndGlyphs">0,21   (partiell)</text>
<rect x="342" y="709" width="13.5" height="9" fill="#3aa0f0"/><rect x="344" y="710.2" width="9" height="6.6" fill="#6cc0ff"/><path d="M342 709.4 H355.5 M342 717.6 H355.5" stroke="#d8e8f8" stroke-width="0.8" stroke-dasharray="1.2 1.2"/>
</svg>
</body></html>
